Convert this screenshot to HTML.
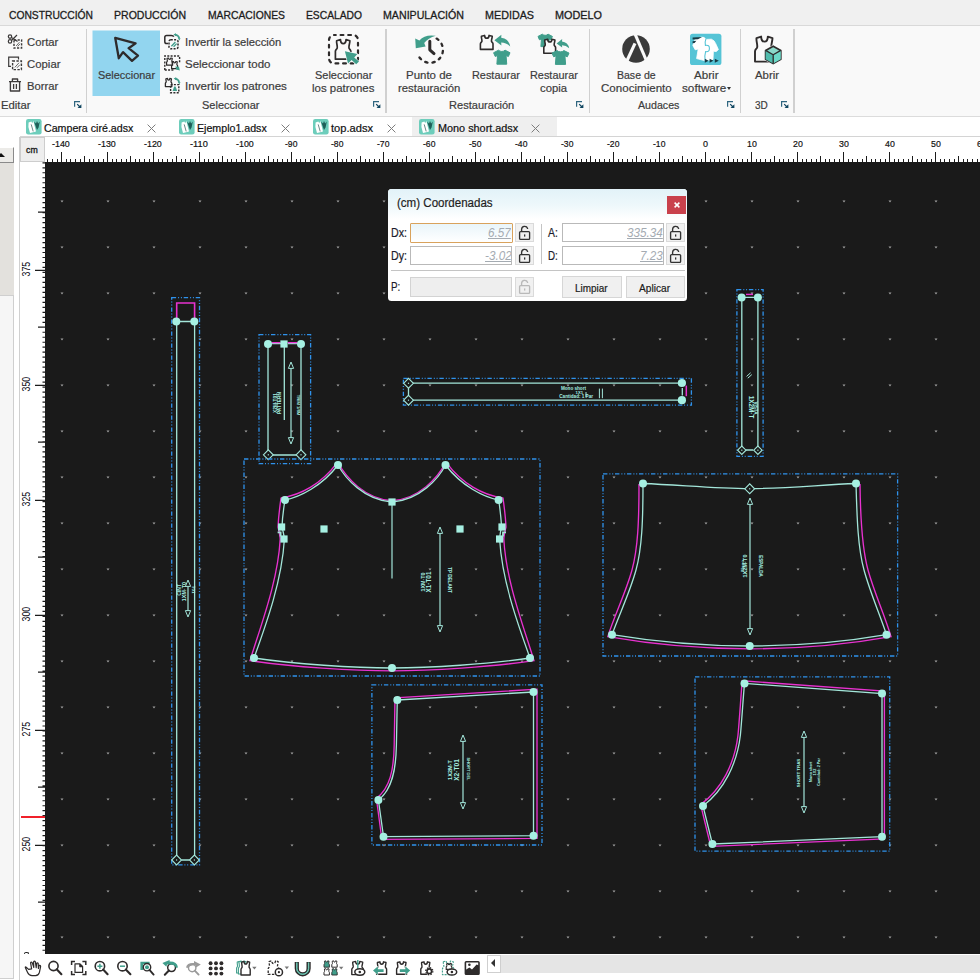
<!DOCTYPE html><html><head><meta charset="utf-8"><title>Audaces</title><style>*{box-sizing:border-box;margin:0;padding:0}
html,body{width:980px;height:980px;overflow:hidden;background:#fff}
body{font-family:"Liberation Sans",sans-serif;position:relative;color:#333}
.abs{position:absolute}
#menu{position:absolute;left:0;top:0;width:980px;height:25px;background:#f0f0f0}
#menu span{position:absolute;top:9.4px;font-size:11px;line-height:13px;color:#1c1c1c;white-space:nowrap;-webkit-text-stroke:0.3px #1c1c1c}
#ribbon{position:absolute;left:0;top:25px;width:980px;height:92px;background:#f9f9f9;border-top:1px solid #d9d9d9;border-bottom:1px solid #dcdcdc}
.t{position:absolute;font-size:11.5px;line-height:13px;color:#3a3a3a;white-space:nowrap}
.tc{position:absolute;font-size:11.5px;line-height:13px;color:#3a3a3a;white-space:nowrap;text-align:center;transform:translateX(-50%)}
.sep{position:absolute;top:29px;width:1px;height:69px;background:#d4d4d4}
.ic{position:absolute;overflow:visible}
#tabs{position:absolute;left:0;top:116px;width:980px;height:21px;background:#fff}
.tab{position:absolute;top:117px;height:19px;font-size:12px;line-height:19px;color:#1a1a1a;white-space:nowrap}
</style></head><body>
<div id="menu"><span id="m0" style="left:9px;transform-origin:0 0;transform:scaleX(0.935)">CONSTRUCCIÓN</span><span id="m1" style="left:114px;transform-origin:0 0;transform:scaleX(0.958)">PRODUCCIÓN</span><span id="m2" style="left:208px;transform-origin:0 0;transform:scaleX(0.940)">MARCACIONES</span><span id="m3" style="left:306px;transform-origin:0 0;transform:scaleX(0.935)">ESCALADO</span><span id="m4" style="left:383px;transform-origin:0 0;transform:scaleX(0.967)">MANIPULACIÓN</span><span id="m5" style="left:485px;transform-origin:0 0;transform:scaleX(0.978)">MEDIDAS</span><span id="m6" style="left:555px;transform-origin:0 0;transform:scaleX(0.986)">MODELO</span></div>
<div id="ribbon"></div><svg class="ic" style="left:0;top:0" width="980" height="116" viewBox="0 0 980 116"><rect x="92.5" y="30.5" width="67.5" height="65.5" fill="#92d5ef"/><g fill="none" stroke="#3c3a3a" stroke-width="1.2"><circle cx="10" cy="36.6" r="1.7"/><circle cx="10" cy="41.4" r="1.7"/><path d="M11.5,37.5L17.5,41.5M11.5,40.5L17,35"/><rect x="14" y="40" width="7.6" height="8" stroke-dasharray="2.2 1.4" stroke-width="1.4"/></g><path d="M16.2,46L19.4,42.2M17.8,46.4L20,43.8" stroke="#6a6a6a" stroke-width="1"/><g fill="none" stroke="#3c3a3a" stroke-width="1.2"><path d="M11,66.4H8.7V57.2H18.5V59.5"/><rect x="12.6" y="61" width="8.8" height="8.6" stroke-dasharray="2.4 1.4" stroke-width="1.4"/></g><path d="M14.8,67.4L19,62.8M17,67.8L19.8,64.8" stroke="#6a6a6a" stroke-width="1"/><g fill="none" stroke="#3c3a3a" stroke-width="1.35" stroke-linejoin="round"><path d="M9,81.6H21M12.4,81.4V79H17.6V81.4"/><path d="M10.4,82V91H19.6V82"/><path d="M13.6,84V89M16.4,84V89" stroke-width="1.3"/></g><path d="M115.2,37.8 L135.6,43.4 L128.6,48.2 L138,55.6 L132,60.8 L123,52.2 L118.8,58.2 Z" fill="none" stroke="#2e2b2b" stroke-width="2.3" stroke-linejoin="round"/><g fill="none" stroke="#2e2b2b" stroke-width="1.5"><path d="M168,43.6H166.6Q164.8,43.6 164.8,41.8V37.2Q164.8,35.4 166.6,35.4H171.4Q173.2,35.4 173.8,36.6"/><rect x="169" y="39.8" width="9" height="9" rx="1.8" stroke-dasharray="2 1.3"/></g><path d="M171.4,46.2L175.4,42M173.6,46.8L176.6,43.6" stroke="#409e8b" stroke-width="1.3"/><path d="M175,34.6Q178.6,35.2 179.4,38.6" fill="none" stroke="#409e8b" stroke-width="1.6"/><path d="M173.4,34.4L176,33.2L176,36.2Z M178,38L180.6,38.4L179.2,40.4Z" fill="#409e8b"/><g fill="none" stroke="#2e2b2b" stroke-width="1.4"><path d="M164.8,70V56H179.6V63" stroke-dasharray="2 1.3"/><path d="M164.8,70H174" stroke-dasharray="2 1.3"/><path d="M167.08,58.43 L168.58,58.00 C168.64,59.94 170.68,59.94 170.74,58.00 L172.24,58.43 C172.24,59.44 171.76,60.16 171.88,61.02 C172.00,61.60 172.60,61.60 172.60,62.32 L172.60,65.20 L166.60,65.20 L166.60,62.32 C166.60,61.60 167.20,61.60 167.32,61.02 C167.44,60.16 166.96,59.44 167.08,58.43 Z" fill="none" stroke="#2e2b2b" stroke-width="1.2" stroke-linejoin="round" /><path d="M172.08,61.93 L173.58,61.50 C173.64,63.44 175.68,63.44 175.74,61.50 L177.24,61.93 C177.24,62.94 176.76,63.66 176.88,64.52 C177.00,65.10 177.60,65.10 177.60,65.82 L177.60,68.70 L171.60,68.70 L171.60,65.82 C171.60,65.10 172.20,65.10 172.32,64.52 C172.44,63.66 171.96,62.94 172.08,61.93 Z" fill="none" stroke="#2e2b2b" stroke-width="1.2" stroke-linejoin="round" /></g><path d="M175.4,66.4L179,66.8L179.8,70.6L176.2,69.6Z" fill="#409e8b"/><g fill="none" stroke="#2e2b2b" stroke-width="1.4"><path d="M165.91,78.89 L167.51,78.40 C167.58,80.61 169.75,80.61 169.82,78.40 L171.42,78.89 C171.42,80.04 170.90,80.86 171.03,81.84 C171.16,82.50 171.80,82.50 171.80,83.32 L171.80,86.60 L165.40,86.60 L165.40,83.32 C165.40,82.50 166.04,82.50 166.17,81.84 C166.30,80.86 165.78,80.04 165.91,78.89 Z" fill="none" stroke="#2e2b2b" stroke-width="1.3" stroke-linejoin="round" /><rect x="170.6" y="84.6" width="8.2" height="8.2" stroke-dasharray="2 1.3"/></g><path d="M172.6,91L174.2,86.4H175.6L177.2,91Z" fill="#409e8b"/><path d="M175.2,78.6Q178.6,79.2 179.2,82.4" fill="none" stroke="#409e8b" stroke-width="1.6"/><path d="M173.6,78.4L176.2,77.2L176.2,80.2Z M177.8,82L180.6,82.2L179.2,84.2Z" fill="#409e8b"/><rect x="329" y="35" width="29" height="28.4" rx="5" fill="none" stroke="#2e2b2b" stroke-width="2.2" stroke-dasharray="2.8 4.8" stroke-dashoffset="1" stroke-linecap="round"/><path d="M336.63,40.78 L340.48,39.60 C340.64,44.89 345.87,44.89 346.03,39.60 L349.88,40.78 C349.88,43.52 348.64,45.48 348.95,47.83 C349.26,49.40 350.80,49.40 350.80,51.36 L350.80,59.20 L335.40,59.20 L335.40,51.36 C335.40,49.40 336.94,49.40 337.25,47.83 C337.56,45.48 336.32,43.52 336.63,40.78 Z" fill="none" stroke="#2e2b2b" stroke-width="1.7" stroke-linejoin="round" /><path d="M344.9,51.2 L357.4,54 L354.2,57.4 L359,61.6 L356.2,64.2 L351.6,60 L348,63.6 Z" fill="#409e8b" stroke="#f9f9f9" stroke-width="1.2" stroke-linejoin="round" paint-order="stroke"/><path d="M436.6,38.6 A13,13 0 1 1 417.8,54.4" fill="none" stroke="#2e2b2b" stroke-width="2.3" stroke-dasharray="2.3 4.9" stroke-linecap="round"/><path d="M429.8,41.2V49.8L434,53.6" fill="none" stroke="#2e2b2b" stroke-width="3" stroke-linecap="round" stroke-linejoin="round"/><path d="M415.2,38.6 L419.4,40.4 Q425,34 435.8,35.8 Q428,38 424.2,43 L425.6,46.4 L415.8,48.2 Z" fill="#409e8b"/><path d="M481.41,36.24 L484.56,35.40 C484.68,39.18 488.97,39.18 489.09,35.40 L492.24,36.24 C492.24,38.20 491.24,39.60 491.49,41.28 C491.74,42.40 493.00,42.40 493.00,43.80 L493.00,49.40 L480.40,49.40 L480.40,43.80 C480.40,42.40 481.66,42.40 481.91,41.28 C482.16,39.60 481.16,38.20 481.41,36.24 Z" fill="none" stroke="#2e2b2b" stroke-width="1.6" stroke-linejoin="round" /><path d="M494.4,40.2 L501.4,34.8 L501.2,37.8 Q508.6,38.4 510.2,46.4 Q506,42.6 501.2,42.6 L501.4,45.6 Z" fill="#409e8b"/><path d="M498.52,50.20 C500.16,51.88 503.44,51.88 505.08,50.20 L510.00,52.72 L508.36,56.50 L506.06,55.52 L506.72,64.20 L496.88,64.20 L497.54,55.52 L495.24,56.50 L493.60,52.72 Z" fill="#409e8b" stroke="#409e8b" stroke-width="1" stroke-linejoin="round"/><path d="M542.32,34.20 C543.76,35.69 546.64,35.69 548.08,34.20 L552.40,36.43 L550.96,39.78 L548.94,38.91 L549.52,46.60 L540.88,46.60 L541.46,38.91 L539.44,39.78 L538.00,36.43 Z" fill="#409e8b" stroke="#409e8b" stroke-width="1" stroke-linejoin="round"/><g><path d="M544.74,40.04 L547.69,39.20 C547.81,42.98 551.82,42.98 551.94,39.20 L554.89,40.04 C554.89,42.00 553.95,43.40 554.18,45.08 C554.42,46.20 555.60,46.20 555.60,47.60 L555.60,53.20 L543.80,53.20 L543.80,47.60 C543.80,46.20 544.98,46.20 545.22,45.08 C545.45,43.40 544.51,42.00 544.74,40.04 Z" fill="#f9f9f9" stroke="#2e2b2b" stroke-width="1.6" stroke-linejoin="round" /></g><path d="M556.6,43.4 L562.2,39 L562,41.4 Q568,42 569.2,48.2 Q566,45.2 562,45.2 L562.2,47.6 Z" fill="#409e8b"/><path d="M557.10,50.60 C558.80,52.26 562.20,52.26 563.90,50.60 L569.00,53.08 L567.30,56.81 L564.92,55.84 L565.60,64.40 L555.40,64.40 L556.08,55.84 L553.70,56.81 L552.00,53.08 Z" fill="#409e8b" stroke="#409e8b" stroke-width="1" stroke-linejoin="round"/><circle cx="636" cy="49" r="13.8" fill="#3a3a3a"/><clipPath id="cpl"><circle cx="636" cy="49" r="14.6"/></clipPath><g clip-path="url(#cpl)" stroke="#f9f9f9" stroke-width="3.1" fill="none"><path d="M634.6,33 L647,62"/><path d="M635,43.4 L626.4,62"/></g><rect x="690" y="33.7" width="31.4" height="31.3" rx="2.6" fill="#55c4d6"/><path d="M695.4,38.8 L701,37.2 Q704.6,36.6 706,39.4 L711.4,39.2 Q714.6,40.4 715.6,43.4 L718.4,49.6 L716.2,51.6 L713.4,51.2 L713,59.4 L705.4,60.8 L696.6,58.6 L698.2,49 L695.2,49.8 L692.8,45.4 Z" fill="#fff" stroke="#fff" stroke-width="0.8" stroke-linejoin="round"/><path d="M706,38.6 Q704.6,42 705.4,45.4 Q709.6,44.6 709.4,48.4 Q709.4,52.4 705.6,51.6 Q704.4,55 705.2,61" fill="none" stroke="#55c4d6" stroke-width="1.1"/><path d="M692.6,37.6L702,37L698,39.2L692.6,39.4Z M692.6,41.2L696.4,40.8L694.6,43L692.6,43.2Z" fill="#173a44"/><path d="M704.8,58.8L708.6,60.8L704.8,62.8Z M709.6,58.8L713.4,60.8L709.6,62.8Z M714.8,58.8L718.8,60.8L714.8,62.8Z" fill="#173a44"/><path d="M756.49,38.10 L761.14,36.60 C761.32,43.35 767.65,43.35 767.83,36.60 L772.48,38.10 C772.48,41.60 771.00,44.10 771.37,47.10 C771.74,49.10 773.60,49.10 773.60,51.60 L773.60,61.60 L755.00,61.60 L755.00,51.60 C755.00,49.10 756.86,49.10 757.23,47.10 C757.60,44.10 756.12,41.60 756.49,38.10 Z" fill="none" stroke="#2e2b2b" stroke-width="1.9" stroke-linejoin="round" /><path d="M773.2,46.2 L780.8,50.4 V59.2 L773.2,63.6 L765.6,59.2 V50.4 Z" fill="#7fd6c6" stroke="#f9f9f9" stroke-width="2.4" paint-order="stroke"/><path d="M773.2,46.2 L780.8,50.4 V59.2 L773.2,63.6 L765.6,59.2 V50.4 Z" fill="#8ad9c9" stroke="#2e2b2b" stroke-width="1.7" stroke-linejoin="round"/><path d="M773.2,54.8 L780.8,50.4 V59.2 L773.2,63.6Z" fill="#6cd9c7"/><path d="M773.2,54.8 L765.6,50.4 V59.2 L773.2,63.6Z" fill="#50bcad"/><path d="M765.6,50.4 L773.2,54.8 L780.8,50.4 M773.2,54.8 V63.6" fill="none" stroke="#2e2b2b" stroke-width="1.3" stroke-linejoin="round"/></svg><div class="abs" style="left:86px;top:29px;width:1.2px;height:84px;background:#d0d0d0"></div><div class="abs" style="left:385.4px;top:29px;width:1.2px;height:84px;background:#d0d0d0"></div><div class="abs" style="left:588.8px;top:29px;width:1.2px;height:84px;background:#d0d0d0"></div><div class="abs" style="left:740px;top:29px;width:1.2px;height:84px;background:#d0d0d0"></div><div class="abs" style="left:793.4px;top:29px;width:1.2px;height:84px;background:#d0d0d0"></div><svg class="ic" style="left:73.5px;top:101px" width="8" height="8" viewBox="0 0 8 8"><path d="M0.6,5.8V0.7H6" fill="none" stroke="#2f6680" stroke-width="1.2"/><path d="M3.2,3.2L6,6" stroke="#0f4560" stroke-width="1.2" fill="none"/><path d="M7.4,3.3V7H3.5Z" fill="#0f4560"/></svg><svg class="ic" style="left:373px;top:101px" width="8" height="8" viewBox="0 0 8 8"><path d="M0.6,5.8V0.7H6" fill="none" stroke="#2f6680" stroke-width="1.2"/><path d="M3.2,3.2L6,6" stroke="#0f4560" stroke-width="1.2" fill="none"/><path d="M7.4,3.3V7H3.5Z" fill="#0f4560"/></svg><svg class="ic" style="left:576px;top:101px" width="8" height="8" viewBox="0 0 8 8"><path d="M0.6,5.8V0.7H6" fill="none" stroke="#2f6680" stroke-width="1.2"/><path d="M3.2,3.2L6,6" stroke="#0f4560" stroke-width="1.2" fill="none"/><path d="M7.4,3.3V7H3.5Z" fill="#0f4560"/></svg><svg class="ic" style="left:727px;top:101px" width="8" height="8" viewBox="0 0 8 8"><path d="M0.6,5.8V0.7H6" fill="none" stroke="#2f6680" stroke-width="1.2"/><path d="M3.2,3.2L6,6" stroke="#0f4560" stroke-width="1.2" fill="none"/><path d="M7.4,3.3V7H3.5Z" fill="#0f4560"/></svg><svg class="ic" style="left:781.3px;top:101px" width="8" height="8" viewBox="0 0 8 8"><path d="M0.6,5.8V0.7H6" fill="none" stroke="#2f6680" stroke-width="1.2"/><path d="M3.2,3.2L6,6" stroke="#0f4560" stroke-width="1.2" fill="none"/><path d="M7.4,3.3V7H3.5Z" fill="#0f4560"/></svg><span style="position:absolute;left:27.0px;top:35.0px;font-size:11.5px;line-height:14px;color:#3c3c3c;white-space:nowrap;transform-origin:0 0;transform:scaleX(0.980);-webkit-text-stroke:0.2px #3c3c3c;">Cortar</span><span style="position:absolute;left:27.0px;top:57.0px;font-size:11.5px;line-height:14px;color:#3c3c3c;white-space:nowrap;transform-origin:0 0;transform:scaleX(0.989);-webkit-text-stroke:0.2px #3c3c3c;">Copiar</span><span style="position:absolute;left:26.8px;top:78.6px;font-size:11.5px;line-height:14px;color:#3c3c3c;white-space:nowrap;transform-origin:0 0;transform:scaleX(0.977);-webkit-text-stroke:0.2px #3c3c3c;">Borrar</span><span style="position:absolute;left:0.5px;top:97.8px;font-size:11.5px;line-height:14px;color:#3c3c3c;white-space:nowrap;transform-origin:0 0;transform:scaleX(0.982);-webkit-text-stroke:0.2px #3c3c3c;">Editar</span><span style="position:absolute;left:97.7px;top:68.0px;font-size:11.5px;line-height:14px;color:#3c3c3c;white-space:nowrap;transform-origin:0 0;transform:scaleX(0.950);-webkit-text-stroke:0.2px #3c3c3c;">Seleccionar</span><span style="position:absolute;left:184.6px;top:35.0px;font-size:11.5px;line-height:14px;color:#3c3c3c;white-space:nowrap;transform-origin:0 0;transform:scaleX(0.979);-webkit-text-stroke:0.2px #3c3c3c;">Invertir la selección</span><span style="position:absolute;left:184.6px;top:57.0px;font-size:11.5px;line-height:14px;color:#3c3c3c;white-space:nowrap;transform-origin:0 0;transform:scaleX(0.997);-webkit-text-stroke:0.2px #3c3c3c;">Seleccionar todo</span><span style="position:absolute;left:184.6px;top:78.6px;font-size:11.5px;line-height:14px;color:#3c3c3c;white-space:nowrap;transform-origin:0 0;transform:scaleX(1.009);-webkit-text-stroke:0.2px #3c3c3c;">Invertir los patrones</span><span style="position:absolute;left:201.5px;top:97.8px;font-size:11.5px;line-height:14px;color:#3c3c3c;white-space:nowrap;transform-origin:0 0;transform:scaleX(0.957);-webkit-text-stroke:0.2px #3c3c3c;">Seleccionar</span><span style="position:absolute;left:314.7px;top:68.0px;font-size:11.5px;line-height:14px;color:#3c3c3c;white-space:nowrap;transform-origin:0 0;transform:scaleX(0.954);-webkit-text-stroke:0.2px #3c3c3c;">Seleccionar</span><span style="position:absolute;left:312.0px;top:80.8px;font-size:11.5px;line-height:14px;color:#3c3c3c;white-space:nowrap;transform-origin:0 0;transform:scaleX(0.996);-webkit-text-stroke:0.2px #3c3c3c;">los patrones</span><span style="position:absolute;left:405.6px;top:68.0px;font-size:11.5px;line-height:14px;color:#3c3c3c;white-space:nowrap;transform-origin:0 0;transform:scaleX(0.997);-webkit-text-stroke:0.2px #3c3c3c;">Punto de</span><span style="position:absolute;left:397.8px;top:80.8px;font-size:11.5px;line-height:14px;color:#3c3c3c;white-space:nowrap;transform-origin:0 0;transform:scaleX(0.986);-webkit-text-stroke:0.2px #3c3c3c;">restauración</span><span style="position:absolute;left:448.8px;top:97.8px;font-size:11.5px;line-height:14px;color:#3c3c3c;white-space:nowrap;transform-origin:0 0;transform:scaleX(0.962);-webkit-text-stroke:0.2px #3c3c3c;">Restauración</span><span style="position:absolute;left:471.6px;top:68.0px;font-size:11.5px;line-height:14px;color:#3c3c3c;white-space:nowrap;transform-origin:0 0;transform:scaleX(0.947);-webkit-text-stroke:0.2px #3c3c3c;">Restaurar</span><span style="position:absolute;left:530.0px;top:68.0px;font-size:11.5px;line-height:14px;color:#3c3c3c;white-space:nowrap;transform-origin:0 0;transform:scaleX(0.947);-webkit-text-stroke:0.2px #3c3c3c;">Restaurar</span><span style="position:absolute;left:540.0px;top:80.8px;font-size:11.5px;line-height:14px;color:#3c3c3c;white-space:nowrap;transform-origin:0 0;transform:scaleX(0.982);-webkit-text-stroke:0.2px #3c3c3c;">copia</span><span style="position:absolute;left:616.8px;top:68.0px;font-size:11.5px;line-height:14px;color:#3c3c3c;white-space:nowrap;transform-origin:0 0;transform:scaleX(0.915);-webkit-text-stroke:0.2px #3c3c3c;">Base de</span><span style="position:absolute;left:600.7px;top:80.8px;font-size:11.5px;line-height:14px;color:#3c3c3c;white-space:nowrap;transform-origin:0 0;transform:scaleX(1.006);-webkit-text-stroke:0.2px #3c3c3c;">Conocimiento</span><span style="position:absolute;left:693.5px;top:68.0px;font-size:11.5px;line-height:14px;color:#3c3c3c;white-space:nowrap;transform-origin:0 0;transform:scaleX(1.009);-webkit-text-stroke:0.2px #3c3c3c;">Abrir</span><span style="position:absolute;left:681.7px;top:80.8px;font-size:11.5px;line-height:14px;color:#3c3c3c;white-space:nowrap;transform-origin:0 0;transform:scaleX(1.019);-webkit-text-stroke:0.2px #3c3c3c;">software</span><div class="abs" style="left:727px;top:87px;width:0;height:0;border-left:2.8px solid transparent;border-right:2.8px solid transparent;border-top:3px solid #333"></div><span style="position:absolute;left:637.6px;top:97.8px;font-size:11.5px;line-height:14px;color:#3c3c3c;white-space:nowrap;transform-origin:0 0;transform:scaleX(0.925);-webkit-text-stroke:0.2px #3c3c3c;">Audaces</span><span style="position:absolute;left:755.0px;top:68.0px;font-size:11.5px;line-height:14px;color:#3c3c3c;white-space:nowrap;transform-origin:0 0;transform:scaleX(0.988);-webkit-text-stroke:0.2px #3c3c3c;">Abrir</span><span style="position:absolute;left:755.0px;top:97.8px;font-size:11.5px;line-height:14px;color:#3c3c3c;white-space:nowrap;transform-origin:0 0;transform:scaleX(0.871);-webkit-text-stroke:0.2px #3c3c3c;">3D</span>
<div class="abs" style="left:0;top:117px;width:980px;height:19px;background:#fff"></div><div class="abs" style="left:412px;top:117px;width:145px;height:19px;background:#efefef"></div><div class="abs" style="left:20px;top:136px;width:960px;height:1px;background:#d4d4d4"></div><svg class="ic" style="left:26px;top:119px" width="16" height="16" viewBox="0 0 16 16"><rect x="0" y="0" width="15.6" height="15.4" rx="2.2" fill="#6dcdbb"/><path d="M2.6,3.4 L5.4,2.4 L6.2,4.2 L7.4,2 L10,12.6 L4,14 L2.4,8Z" fill="#fff"/><path d="M5.2,5.4L7.2,12.4" stroke="#5e7c78" stroke-width="0.9"/><path d="M8,2.6 L10,4.4 L11,2 L12.2,4.6 L13.8,2.4 L12.6,8.4 L11,11 L9.6,7Z" fill="#1f5f59"/></svg><span style="position:absolute;left:44.4px;top:122.4px;font-size:10.8px;line-height:13px;color:#101010;white-space:nowrap;transform-origin:0 0;transform:scaleX(0.986);-webkit-text-stroke:0.2px #101010;">Campera ciré.adsx</span><svg class="ic" style="left:147px;top:124px" width="9" height="9" viewBox="0 0 9 9"><path d="M0.6,0.6L8.4,8.4M8.4,0.6L0.6,8.4" stroke="#7d7d7d" stroke-width="1"/></svg><svg class="ic" style="left:179px;top:119px" width="16" height="16" viewBox="0 0 16 16"><rect x="0" y="0" width="15.6" height="15.4" rx="2.2" fill="#6dcdbb"/><path d="M2.6,3.4 L5.4,2.4 L6.2,4.2 L7.4,2 L10,12.6 L4,14 L2.4,8Z" fill="#fff"/><path d="M5.2,5.4L7.2,12.4" stroke="#5e7c78" stroke-width="0.9"/><path d="M8,2.6 L10,4.4 L11,2 L12.2,4.6 L13.8,2.4 L12.6,8.4 L11,11 L9.6,7Z" fill="#1f5f59"/></svg><span style="position:absolute;left:197.4px;top:122.4px;font-size:10.8px;line-height:13px;color:#101010;white-space:nowrap;transform-origin:0 0;transform:scaleX(0.985);-webkit-text-stroke:0.2px #101010;">Ejemplo1.adsx</span><svg class="ic" style="left:280.6px;top:124px" width="9" height="9" viewBox="0 0 9 9"><path d="M0.6,0.6L8.4,8.4M8.4,0.6L0.6,8.4" stroke="#7d7d7d" stroke-width="1"/></svg><svg class="ic" style="left:313px;top:119px" width="16" height="16" viewBox="0 0 16 16"><rect x="0" y="0" width="15.6" height="15.4" rx="2.2" fill="#6dcdbb"/><path d="M2.6,3.4 L5.4,2.4 L6.2,4.2 L7.4,2 L10,12.6 L4,14 L2.4,8Z" fill="#fff"/><path d="M5.2,5.4L7.2,12.4" stroke="#5e7c78" stroke-width="0.9"/><path d="M8,2.6 L10,4.4 L11,2 L12.2,4.6 L13.8,2.4 L12.6,8.4 L11,11 L9.6,7Z" fill="#1f5f59"/></svg><span style="position:absolute;left:331.4px;top:122.4px;font-size:10.8px;line-height:13px;color:#101010;white-space:nowrap;transform-origin:0 0;transform:scaleX(1.029);-webkit-text-stroke:0.2px #101010;">top.adsx</span><svg class="ic" style="left:387px;top:124px" width="9" height="9" viewBox="0 0 9 9"><path d="M0.6,0.6L8.4,8.4M8.4,0.6L0.6,8.4" stroke="#7d7d7d" stroke-width="1"/></svg><svg class="ic" style="left:419.3px;top:119px" width="16" height="16" viewBox="0 0 16 16"><rect x="0" y="0" width="15.6" height="15.4" rx="2.2" fill="#6dcdbb"/><path d="M2.6,3.4 L5.4,2.4 L6.2,4.2 L7.4,2 L10,12.6 L4,14 L2.4,8Z" fill="#fff"/><path d="M5.2,5.4L7.2,12.4" stroke="#5e7c78" stroke-width="0.9"/><path d="M8,2.6 L10,4.4 L11,2 L12.2,4.6 L13.8,2.4 L12.6,8.4 L11,11 L9.6,7Z" fill="#1f5f59"/></svg><span style="position:absolute;left:437.6px;top:122.4px;font-size:10.8px;line-height:13px;color:#101010;white-space:nowrap;transform-origin:0 0;transform:scaleX(1.005);-webkit-text-stroke:0.2px #101010;">Mono short.adsx</span><svg class="ic" style="left:531px;top:124px" width="9" height="9" viewBox="0 0 9 9"><path d="M0.6,0.6L8.4,8.4M8.4,0.6L0.6,8.4" stroke="#7d7d7d" stroke-width="1"/></svg>
<div class="abs" style="left:0;top:117px;width:20px;height:863px;background:#fff"></div><div class="abs" style="left:0;top:163px;width:14px;height:132px;background:#e3e1dd"></div><div class="abs" style="left:0;top:295px;width:14px;height:684px;background:#f6f6f6;border:1px solid #cfcfcf;border-left:none"></div><div class="abs" style="left:0;top:147px;width:13.5px;height:16px;background:#ecebe8;border:1px solid #fff;border-right:1.5px solid #8a8a8a;border-bottom:1.5px solid #8a8a8a;border-left:none"></div><div class="abs" style="left:-2.8px;top:152.8px;width:0;height:0;border-left:4.2px solid transparent;border-right:4.2px solid transparent;border-bottom:4.2px solid #111"></div><div class="abs" style="left:19px;top:137px;width:1px;height:843px;background:#d0d0d0"></div><div class="abs" style="left:20px;top:137px;width:25px;height:25px;background:#eeeeee;border:1.2px solid #cdcdcd"></div><span style="position:absolute;left:26.0px;top:143.5px;font-size:9.6px;line-height:12px;color:#1a1a1a;white-space:nowrap;transform-origin:0 0;transform:scaleX(0.914);-webkit-text-stroke:0.35px #1a1a1a;">cm</span><svg class="ic" style="left:0;top:0" width="980" height="980" viewBox="0 0 980 980" shape-rendering="crispEdges"><rect x="45" y="137" width="935" height="25" fill="#fff"/><rect x="20" y="162" width="25" height="792" fill="#fff"/><path d="M47,159h1v3h-1zM52,159h1v3h-1zM57,159h1v3h-1zM61,152h1v10h-1zM66,159h1v3h-1zM70,159h1v3h-1zM75,159h1v3h-1zM80,159h1v3h-1zM84,156h1v6h-1zM89,159h1v3h-1zM93,159h1v3h-1zM98,159h1v3h-1zM103,159h1v3h-1zM107,152h1v10h-1zM112,159h1v3h-1zM116,159h1v3h-1zM121,159h1v3h-1zM126,159h1v3h-1zM130,156h1v6h-1zM135,159h1v3h-1zM139,159h1v3h-1zM144,159h1v3h-1zM149,159h1v3h-1zM153,152h1v10h-1zM158,159h1v3h-1zM162,159h1v3h-1zM167,159h1v3h-1zM172,159h1v3h-1zM176,156h1v6h-1zM181,159h1v3h-1zM185,159h1v3h-1zM190,159h1v3h-1zM195,159h1v3h-1zM199,152h1v10h-1zM204,159h1v3h-1zM208,159h1v3h-1zM213,159h1v3h-1zM218,159h1v3h-1zM222,156h1v6h-1zM227,159h1v3h-1zM231,159h1v3h-1zM236,159h1v3h-1zM241,159h1v3h-1zM245,152h1v10h-1zM250,159h1v3h-1zM254,159h1v3h-1zM259,159h1v3h-1zM264,159h1v3h-1zM268,156h1v6h-1zM273,159h1v3h-1zM277,159h1v3h-1zM282,159h1v3h-1zM287,159h1v3h-1zM291,152h1v10h-1zM296,159h1v3h-1zM300,159h1v3h-1zM305,159h1v3h-1zM310,159h1v3h-1zM314,156h1v6h-1zM319,159h1v3h-1zM323,159h1v3h-1zM328,159h1v3h-1zM333,159h1v3h-1zM337,152h1v10h-1zM342,159h1v3h-1zM346,159h1v3h-1zM351,159h1v3h-1zM356,159h1v3h-1zM360,156h1v6h-1zM365,159h1v3h-1zM369,159h1v3h-1zM374,159h1v3h-1zM379,159h1v3h-1zM383,152h1v10h-1zM388,159h1v3h-1zM392,159h1v3h-1zM397,159h1v3h-1zM402,159h1v3h-1zM406,156h1v6h-1zM411,159h1v3h-1zM415,159h1v3h-1zM420,159h1v3h-1zM425,159h1v3h-1zM429,152h1v10h-1zM434,159h1v3h-1zM438,159h1v3h-1zM443,159h1v3h-1zM448,159h1v3h-1zM452,156h1v6h-1zM457,159h1v3h-1zM461,159h1v3h-1zM466,159h1v3h-1zM471,159h1v3h-1zM475,152h1v10h-1zM480,159h1v3h-1zM484,159h1v3h-1zM489,159h1v3h-1zM494,159h1v3h-1zM498,156h1v6h-1zM503,159h1v3h-1zM507,159h1v3h-1zM512,159h1v3h-1zM517,159h1v3h-1zM521,152h1v10h-1zM526,159h1v3h-1zM530,159h1v3h-1zM535,159h1v3h-1zM540,159h1v3h-1zM544,156h1v6h-1zM549,159h1v3h-1zM553,159h1v3h-1zM558,159h1v3h-1zM563,159h1v3h-1zM567,152h1v10h-1zM572,159h1v3h-1zM576,159h1v3h-1zM581,159h1v3h-1zM586,159h1v3h-1zM590,156h1v6h-1zM595,159h1v3h-1zM599,159h1v3h-1zM604,159h1v3h-1zM609,159h1v3h-1zM613,152h1v10h-1zM618,159h1v3h-1zM622,159h1v3h-1zM627,159h1v3h-1zM632,159h1v3h-1zM636,156h1v6h-1zM641,159h1v3h-1zM645,159h1v3h-1zM650,159h1v3h-1zM655,159h1v3h-1zM659,152h1v10h-1zM664,159h1v3h-1zM668,159h1v3h-1zM673,159h1v3h-1zM678,159h1v3h-1zM682,156h1v6h-1zM687,159h1v3h-1zM691,159h1v3h-1zM696,159h1v3h-1zM701,159h1v3h-1zM705,152h1v10h-1zM710,159h1v3h-1zM714,159h1v3h-1zM719,159h1v3h-1zM724,159h1v3h-1zM728,156h1v6h-1zM733,159h1v3h-1zM737,159h1v3h-1zM742,159h1v3h-1zM747,159h1v3h-1zM751,152h1v10h-1zM756,159h1v3h-1zM760,159h1v3h-1zM765,159h1v3h-1zM770,159h1v3h-1zM774,156h1v6h-1zM779,159h1v3h-1zM783,159h1v3h-1zM788,159h1v3h-1zM793,159h1v3h-1zM797,152h1v10h-1zM802,159h1v3h-1zM806,159h1v3h-1zM811,159h1v3h-1zM816,159h1v3h-1zM820,156h1v6h-1zM825,159h1v3h-1zM829,159h1v3h-1zM834,159h1v3h-1zM839,159h1v3h-1zM843,152h1v10h-1zM848,159h1v3h-1zM852,159h1v3h-1zM857,159h1v3h-1zM862,159h1v3h-1zM866,156h1v6h-1zM871,159h1v3h-1zM875,159h1v3h-1zM880,159h1v3h-1zM885,159h1v3h-1zM889,152h1v10h-1zM894,159h1v3h-1zM898,159h1v3h-1zM903,159h1v3h-1zM908,159h1v3h-1zM912,156h1v6h-1zM917,159h1v3h-1zM921,159h1v3h-1zM926,159h1v3h-1zM931,159h1v3h-1zM935,152h1v10h-1zM940,159h1v3h-1zM944,159h1v3h-1zM949,159h1v3h-1zM954,159h1v3h-1zM958,156h1v6h-1zM963,159h1v3h-1zM967,159h1v3h-1zM972,159h1v3h-1zM977,159h1v3h-1z" fill="#1c1c1c"/><path d="M35,269.70v1.2h10v-1.2zM35,384.70v1.2h10v-1.2zM35,499.70v1.2h10v-1.2zM35,614.70v1.2h10v-1.2zM35,729.70v1.2h10v-1.2zM35,844.70v1.2h10v-1.2zM38,211.45v1.3h7v-1.3zM38,326.45v1.3h7v-1.3zM38,441.45v1.3h7v-1.3zM38,556.45v1.3h7v-1.3zM38,671.45v1.3h7v-1.3zM38,786.45v1.3h7v-1.3zM38,901.45v1.3h7v-1.3zM42.5,162.20v1.2h2.5v-1.2zM42.5,167.19v1.2h2.5v-1.2zM42.5,172.17v1.2h2.5v-1.2zM42.5,177.15v1.2h2.5v-1.2zM42.5,182.14v1.2h2.5v-1.2zM42.5,187.12v1.2h2.5v-1.2zM42.5,192.11v1.2h2.5v-1.2zM42.5,197.09v1.2h2.5v-1.2zM42.5,202.07v1.2h2.5v-1.2zM42.5,207.06v1.2h2.5v-1.2zM42.5,212.04v1.2h2.5v-1.2zM42.5,217.03v1.2h2.5v-1.2zM42.5,222.01v1.2h2.5v-1.2zM42.5,226.99v1.2h2.5v-1.2zM42.5,231.98v1.2h2.5v-1.2zM42.5,236.96v1.2h2.5v-1.2zM42.5,241.95v1.2h2.5v-1.2zM42.5,246.93v1.2h2.5v-1.2zM42.5,251.91v1.2h2.5v-1.2zM42.5,256.90v1.2h2.5v-1.2zM42.5,261.88v1.2h2.5v-1.2zM42.5,266.87v1.2h2.5v-1.2zM42.5,271.85v1.2h2.5v-1.2zM42.5,276.83v1.2h2.5v-1.2zM42.5,281.82v1.2h2.5v-1.2zM42.5,286.80v1.2h2.5v-1.2zM42.5,291.79v1.2h2.5v-1.2zM42.5,296.77v1.2h2.5v-1.2zM42.5,301.75v1.2h2.5v-1.2zM42.5,306.74v1.2h2.5v-1.2zM42.5,311.72v1.2h2.5v-1.2zM42.5,316.71v1.2h2.5v-1.2zM42.5,321.69v1.2h2.5v-1.2zM42.5,326.67v1.2h2.5v-1.2zM42.5,331.66v1.2h2.5v-1.2zM42.5,336.64v1.2h2.5v-1.2zM42.5,341.63v1.2h2.5v-1.2zM42.5,346.61v1.2h2.5v-1.2zM42.5,351.59v1.2h2.5v-1.2zM42.5,356.58v1.2h2.5v-1.2zM42.5,361.56v1.2h2.5v-1.2zM42.5,366.55v1.2h2.5v-1.2zM42.5,371.53v1.2h2.5v-1.2zM42.5,376.51v1.2h2.5v-1.2zM42.5,381.50v1.2h2.5v-1.2zM42.5,386.48v1.2h2.5v-1.2zM42.5,391.47v1.2h2.5v-1.2zM42.5,396.45v1.2h2.5v-1.2zM42.5,401.43v1.2h2.5v-1.2zM42.5,406.42v1.2h2.5v-1.2zM42.5,411.40v1.2h2.5v-1.2zM42.5,416.39v1.2h2.5v-1.2zM42.5,421.37v1.2h2.5v-1.2zM42.5,426.35v1.2h2.5v-1.2zM42.5,431.34v1.2h2.5v-1.2zM42.5,436.32v1.2h2.5v-1.2zM42.5,441.31v1.2h2.5v-1.2zM42.5,446.29v1.2h2.5v-1.2zM42.5,451.27v1.2h2.5v-1.2zM42.5,456.26v1.2h2.5v-1.2zM42.5,461.24v1.2h2.5v-1.2zM42.5,466.23v1.2h2.5v-1.2zM42.5,471.21v1.2h2.5v-1.2zM42.5,476.19v1.2h2.5v-1.2zM42.5,481.18v1.2h2.5v-1.2zM42.5,486.16v1.2h2.5v-1.2zM42.5,491.15v1.2h2.5v-1.2zM42.5,496.13v1.2h2.5v-1.2zM42.5,501.11v1.2h2.5v-1.2zM42.5,506.10v1.2h2.5v-1.2zM42.5,511.08v1.2h2.5v-1.2zM42.5,516.07v1.2h2.5v-1.2zM42.5,521.05v1.2h2.5v-1.2zM42.5,526.03v1.2h2.5v-1.2zM42.5,531.02v1.2h2.5v-1.2zM42.5,536.00v1.2h2.5v-1.2zM42.5,540.99v1.2h2.5v-1.2zM42.5,545.97v1.2h2.5v-1.2zM42.5,550.95v1.2h2.5v-1.2zM42.5,555.94v1.2h2.5v-1.2zM42.5,560.92v1.2h2.5v-1.2zM42.5,565.91v1.2h2.5v-1.2zM42.5,570.89v1.2h2.5v-1.2zM42.5,575.87v1.2h2.5v-1.2zM42.5,580.86v1.2h2.5v-1.2zM42.5,585.84v1.2h2.5v-1.2zM42.5,590.83v1.2h2.5v-1.2zM42.5,595.81v1.2h2.5v-1.2zM42.5,600.79v1.2h2.5v-1.2zM42.5,605.78v1.2h2.5v-1.2zM42.5,610.76v1.2h2.5v-1.2zM42.5,615.75v1.2h2.5v-1.2zM42.5,620.73v1.2h2.5v-1.2zM42.5,625.71v1.2h2.5v-1.2zM42.5,630.70v1.2h2.5v-1.2zM42.5,635.68v1.2h2.5v-1.2zM42.5,640.67v1.2h2.5v-1.2zM42.5,645.65v1.2h2.5v-1.2zM42.5,650.63v1.2h2.5v-1.2zM42.5,655.62v1.2h2.5v-1.2zM42.5,660.60v1.2h2.5v-1.2zM42.5,665.59v1.2h2.5v-1.2zM42.5,670.57v1.2h2.5v-1.2zM42.5,675.55v1.2h2.5v-1.2zM42.5,680.54v1.2h2.5v-1.2zM42.5,685.52v1.2h2.5v-1.2zM42.5,690.51v1.2h2.5v-1.2zM42.5,695.49v1.2h2.5v-1.2zM42.5,700.47v1.2h2.5v-1.2zM42.5,705.46v1.2h2.5v-1.2zM42.5,710.44v1.2h2.5v-1.2zM42.5,715.43v1.2h2.5v-1.2zM42.5,720.41v1.2h2.5v-1.2zM42.5,725.39v1.2h2.5v-1.2zM42.5,730.38v1.2h2.5v-1.2zM42.5,735.36v1.2h2.5v-1.2zM42.5,740.35v1.2h2.5v-1.2zM42.5,745.33v1.2h2.5v-1.2zM42.5,750.31v1.2h2.5v-1.2zM42.5,755.30v1.2h2.5v-1.2zM42.5,760.28v1.2h2.5v-1.2zM42.5,765.27v1.2h2.5v-1.2zM42.5,770.25v1.2h2.5v-1.2zM42.5,775.23v1.2h2.5v-1.2zM42.5,780.22v1.2h2.5v-1.2zM42.5,785.20v1.2h2.5v-1.2zM42.5,790.19v1.2h2.5v-1.2zM42.5,795.17v1.2h2.5v-1.2zM42.5,800.15v1.2h2.5v-1.2zM42.5,805.14v1.2h2.5v-1.2zM42.5,810.12v1.2h2.5v-1.2zM42.5,815.11v1.2h2.5v-1.2zM42.5,820.09v1.2h2.5v-1.2zM42.5,825.07v1.2h2.5v-1.2zM42.5,830.06v1.2h2.5v-1.2zM42.5,835.04v1.2h2.5v-1.2zM42.5,840.03v1.2h2.5v-1.2zM42.5,845.01v1.2h2.5v-1.2zM42.5,849.99v1.2h2.5v-1.2zM42.5,854.98v1.2h2.5v-1.2zM42.5,859.96v1.2h2.5v-1.2zM42.5,864.95v1.2h2.5v-1.2zM42.5,869.93v1.2h2.5v-1.2zM42.5,874.91v1.2h2.5v-1.2zM42.5,879.90v1.2h2.5v-1.2zM42.5,884.88v1.2h2.5v-1.2zM42.5,889.87v1.2h2.5v-1.2zM42.5,894.85v1.2h2.5v-1.2zM42.5,899.83v1.2h2.5v-1.2zM42.5,904.82v1.2h2.5v-1.2zM42.5,909.80v1.2h2.5v-1.2zM42.5,914.79v1.2h2.5v-1.2zM42.5,919.77v1.2h2.5v-1.2zM42.5,924.75v1.2h2.5v-1.2zM42.5,929.74v1.2h2.5v-1.2zM42.5,934.72v1.2h2.5v-1.2zM42.5,939.71v1.2h2.5v-1.2zM42.5,944.69v1.2h2.5v-1.2zM42.5,949.67v1.2h2.5v-1.2z" fill="#1c1c1c" shape-rendering="auto"/><rect x="21" y="816" width="24" height="1.6" fill="#f0202a"/></svg><span style="position:absolute;left:52.2px;top:138.2px;font-size:9.5px;line-height:11px;color:#111;white-space:nowrap;transform-origin:0 0;transform:scaleX(0.936);-webkit-text-stroke:0.2px #111;">-140</span><span style="position:absolute;left:98.2px;top:138.2px;font-size:9.5px;line-height:11px;color:#111;white-space:nowrap;transform-origin:0 0;transform:scaleX(0.936);-webkit-text-stroke:0.2px #111;">-130</span><span style="position:absolute;left:144.2px;top:138.2px;font-size:9.5px;line-height:11px;color:#111;white-space:nowrap;transform-origin:0 0;transform:scaleX(0.936);-webkit-text-stroke:0.2px #111;">-120</span><span style="position:absolute;left:190.2px;top:138.2px;font-size:9.5px;line-height:11px;color:#111;white-space:nowrap;transform-origin:0 0;transform:scaleX(0.972);-webkit-text-stroke:0.2px #111;">-110</span><span style="position:absolute;left:236.2px;top:138.2px;font-size:9.5px;line-height:11px;color:#111;white-space:nowrap;transform-origin:0 0;transform:scaleX(0.936);-webkit-text-stroke:0.2px #111;">-100</span><span style="position:absolute;left:284.9px;top:138.2px;font-size:9.5px;line-height:11px;color:#111;white-space:nowrap;transform-origin:0 0;transform:scaleX(0.903);-webkit-text-stroke:0.2px #111;">-90</span><span style="position:absolute;left:330.9px;top:138.2px;font-size:9.5px;line-height:11px;color:#111;white-space:nowrap;transform-origin:0 0;transform:scaleX(0.903);-webkit-text-stroke:0.2px #111;">-80</span><span style="position:absolute;left:376.9px;top:138.2px;font-size:9.5px;line-height:11px;color:#111;white-space:nowrap;transform-origin:0 0;transform:scaleX(0.903);-webkit-text-stroke:0.2px #111;">-70</span><span style="position:absolute;left:422.9px;top:138.2px;font-size:9.5px;line-height:11px;color:#111;white-space:nowrap;transform-origin:0 0;transform:scaleX(0.903);-webkit-text-stroke:0.2px #111;">-60</span><span style="position:absolute;left:468.9px;top:138.2px;font-size:9.5px;line-height:11px;color:#111;white-space:nowrap;transform-origin:0 0;transform:scaleX(0.903);-webkit-text-stroke:0.2px #111;">-50</span><span style="position:absolute;left:514.9px;top:138.2px;font-size:9.5px;line-height:11px;color:#111;white-space:nowrap;transform-origin:0 0;transform:scaleX(0.903);-webkit-text-stroke:0.2px #111;">-40</span><span style="position:absolute;left:560.9px;top:138.2px;font-size:9.5px;line-height:11px;color:#111;white-space:nowrap;transform-origin:0 0;transform:scaleX(0.903);-webkit-text-stroke:0.2px #111;">-30</span><span style="position:absolute;left:606.9px;top:138.2px;font-size:9.5px;line-height:11px;color:#111;white-space:nowrap;transform-origin:0 0;transform:scaleX(0.903);-webkit-text-stroke:0.2px #111;">-20</span><span style="position:absolute;left:652.9px;top:138.2px;font-size:9.5px;line-height:11px;color:#111;white-space:nowrap;transform-origin:0 0;transform:scaleX(0.903);-webkit-text-stroke:0.2px #111;">-10</span><span style="position:absolute;left:703.4px;top:138.2px;font-size:9.5px;line-height:11px;color:#111;white-space:nowrap;transform-origin:0 0;transform:scaleX(0.946);-webkit-text-stroke:0.2px #111;">0</span><span style="position:absolute;left:747.0px;top:138.2px;font-size:9.5px;line-height:11px;color:#111;white-space:nowrap;transform-origin:0 0;transform:scaleX(0.928);-webkit-text-stroke:0.2px #111;">10</span><span style="position:absolute;left:793.0px;top:138.2px;font-size:9.5px;line-height:11px;color:#111;white-space:nowrap;transform-origin:0 0;transform:scaleX(0.928);-webkit-text-stroke:0.2px #111;">20</span><span style="position:absolute;left:839.0px;top:138.2px;font-size:9.5px;line-height:11px;color:#111;white-space:nowrap;transform-origin:0 0;transform:scaleX(0.928);-webkit-text-stroke:0.2px #111;">30</span><span style="position:absolute;left:885.0px;top:138.2px;font-size:9.5px;line-height:11px;color:#111;white-space:nowrap;transform-origin:0 0;transform:scaleX(0.928);-webkit-text-stroke:0.2px #111;">40</span><span style="position:absolute;left:931.0px;top:138.2px;font-size:9.5px;line-height:11px;color:#111;white-space:nowrap;transform-origin:0 0;transform:scaleX(0.928);-webkit-text-stroke:0.2px #111;">50</span><span style="position:absolute;left:977.0px;top:138.2px;font-size:9.5px;line-height:11px;color:#111;white-space:nowrap;transform-origin:0 0;transform:scaleX(0.928);-webkit-text-stroke:0.2px #111;">60</span><div class="abs" style="left:20.6px;top:258.9px;width:12px;height:18px"><span style="position:absolute;left:0;top:18px;font-size:10px;line-height:12px;color:#0a0a14;transform-origin:0 0;transform:rotate(-90deg) scaleX(.88);white-space:nowrap;width:18px;text-align:center">375</span></div><div class="abs" style="left:20.6px;top:373.9px;width:12px;height:18px"><span style="position:absolute;left:0;top:18px;font-size:10px;line-height:12px;color:#0a0a14;transform-origin:0 0;transform:rotate(-90deg) scaleX(.88);white-space:nowrap;width:18px;text-align:center">350</span></div><div class="abs" style="left:20.6px;top:488.9px;width:12px;height:18px"><span style="position:absolute;left:0;top:18px;font-size:10px;line-height:12px;color:#0a0a14;transform-origin:0 0;transform:rotate(-90deg) scaleX(.88);white-space:nowrap;width:18px;text-align:center">325</span></div><div class="abs" style="left:20.6px;top:603.9px;width:12px;height:18px"><span style="position:absolute;left:0;top:18px;font-size:10px;line-height:12px;color:#0a0a14;transform-origin:0 0;transform:rotate(-90deg) scaleX(.88);white-space:nowrap;width:18px;text-align:center">300</span></div><div class="abs" style="left:20.6px;top:718.9px;width:12px;height:18px"><span style="position:absolute;left:0;top:18px;font-size:10px;line-height:12px;color:#0a0a14;transform-origin:0 0;transform:rotate(-90deg) scaleX(.88);white-space:nowrap;width:18px;text-align:center">275</span></div><div class="abs" style="left:20.6px;top:833.9px;width:12px;height:18px"><span style="position:absolute;left:0;top:18px;font-size:10px;line-height:12px;color:#0a0a14;transform-origin:0 0;transform:rotate(-90deg) scaleX(.88);white-space:nowrap;width:18px;text-align:center">250</span></div>
<svg class="ic" style="left:45px;top:162px" width="935" height="792" viewBox="45 162 935 792"><rect x="45" y="162" width="935" height="792" fill="#1a1a1a"/><path d="M60.5,200.4h3l-1.5,2.1zM60.5,246.4h3l-1.5,2.1zM60.5,292.4h3l-1.5,2.1zM60.5,338.4h3l-1.5,2.1zM60.5,384.4h3l-1.5,2.1zM60.5,430.4h3l-1.5,2.1zM60.5,476.4h3l-1.5,2.1zM60.5,522.4h3l-1.5,2.1zM60.5,568.4h3l-1.5,2.1zM60.5,614.4h3l-1.5,2.1zM60.5,660.4h3l-1.5,2.1zM60.5,706.4h3l-1.5,2.1zM60.5,752.4h3l-1.5,2.1zM60.5,798.4h3l-1.5,2.1zM60.5,844.4h3l-1.5,2.1zM60.5,890.4h3l-1.5,2.1zM60.5,936.4h3l-1.5,2.1zM106.5,200.4h3l-1.5,2.1zM106.5,246.4h3l-1.5,2.1zM106.5,292.4h3l-1.5,2.1zM106.5,338.4h3l-1.5,2.1zM106.5,384.4h3l-1.5,2.1zM106.5,430.4h3l-1.5,2.1zM106.5,476.4h3l-1.5,2.1zM106.5,522.4h3l-1.5,2.1zM106.5,568.4h3l-1.5,2.1zM106.5,614.4h3l-1.5,2.1zM106.5,660.4h3l-1.5,2.1zM106.5,706.4h3l-1.5,2.1zM106.5,752.4h3l-1.5,2.1zM106.5,798.4h3l-1.5,2.1zM106.5,844.4h3l-1.5,2.1zM106.5,890.4h3l-1.5,2.1zM106.5,936.4h3l-1.5,2.1zM152.5,200.4h3l-1.5,2.1zM152.5,246.4h3l-1.5,2.1zM152.5,292.4h3l-1.5,2.1zM152.5,338.4h3l-1.5,2.1zM152.5,384.4h3l-1.5,2.1zM152.5,430.4h3l-1.5,2.1zM152.5,476.4h3l-1.5,2.1zM152.5,522.4h3l-1.5,2.1zM152.5,568.4h3l-1.5,2.1zM152.5,614.4h3l-1.5,2.1zM152.5,660.4h3l-1.5,2.1zM152.5,706.4h3l-1.5,2.1zM152.5,752.4h3l-1.5,2.1zM152.5,798.4h3l-1.5,2.1zM152.5,844.4h3l-1.5,2.1zM152.5,890.4h3l-1.5,2.1zM152.5,936.4h3l-1.5,2.1zM198.5,200.4h3l-1.5,2.1zM198.5,246.4h3l-1.5,2.1zM198.5,292.4h3l-1.5,2.1zM198.5,338.4h3l-1.5,2.1zM198.5,384.4h3l-1.5,2.1zM198.5,430.4h3l-1.5,2.1zM198.5,476.4h3l-1.5,2.1zM198.5,522.4h3l-1.5,2.1zM198.5,568.4h3l-1.5,2.1zM198.5,614.4h3l-1.5,2.1zM198.5,660.4h3l-1.5,2.1zM198.5,706.4h3l-1.5,2.1zM198.5,752.4h3l-1.5,2.1zM198.5,798.4h3l-1.5,2.1zM198.5,844.4h3l-1.5,2.1zM198.5,890.4h3l-1.5,2.1zM198.5,936.4h3l-1.5,2.1zM244.5,200.4h3l-1.5,2.1zM244.5,246.4h3l-1.5,2.1zM244.5,292.4h3l-1.5,2.1zM244.5,338.4h3l-1.5,2.1zM244.5,384.4h3l-1.5,2.1zM244.5,430.4h3l-1.5,2.1zM244.5,476.4h3l-1.5,2.1zM244.5,522.4h3l-1.5,2.1zM244.5,568.4h3l-1.5,2.1zM244.5,614.4h3l-1.5,2.1zM244.5,660.4h3l-1.5,2.1zM244.5,706.4h3l-1.5,2.1zM244.5,752.4h3l-1.5,2.1zM244.5,798.4h3l-1.5,2.1zM244.5,844.4h3l-1.5,2.1zM244.5,890.4h3l-1.5,2.1zM244.5,936.4h3l-1.5,2.1zM290.5,200.4h3l-1.5,2.1zM290.5,246.4h3l-1.5,2.1zM290.5,292.4h3l-1.5,2.1zM290.5,338.4h3l-1.5,2.1zM290.5,384.4h3l-1.5,2.1zM290.5,430.4h3l-1.5,2.1zM290.5,476.4h3l-1.5,2.1zM290.5,522.4h3l-1.5,2.1zM290.5,568.4h3l-1.5,2.1zM290.5,614.4h3l-1.5,2.1zM290.5,660.4h3l-1.5,2.1zM290.5,706.4h3l-1.5,2.1zM290.5,752.4h3l-1.5,2.1zM290.5,798.4h3l-1.5,2.1zM290.5,844.4h3l-1.5,2.1zM290.5,890.4h3l-1.5,2.1zM290.5,936.4h3l-1.5,2.1zM336.5,200.4h3l-1.5,2.1zM336.5,246.4h3l-1.5,2.1zM336.5,292.4h3l-1.5,2.1zM336.5,338.4h3l-1.5,2.1zM336.5,384.4h3l-1.5,2.1zM336.5,430.4h3l-1.5,2.1zM336.5,476.4h3l-1.5,2.1zM336.5,522.4h3l-1.5,2.1zM336.5,568.4h3l-1.5,2.1zM336.5,614.4h3l-1.5,2.1zM336.5,660.4h3l-1.5,2.1zM336.5,706.4h3l-1.5,2.1zM336.5,752.4h3l-1.5,2.1zM336.5,798.4h3l-1.5,2.1zM336.5,844.4h3l-1.5,2.1zM336.5,890.4h3l-1.5,2.1zM336.5,936.4h3l-1.5,2.1zM382.5,200.4h3l-1.5,2.1zM382.5,246.4h3l-1.5,2.1zM382.5,292.4h3l-1.5,2.1zM382.5,338.4h3l-1.5,2.1zM382.5,384.4h3l-1.5,2.1zM382.5,430.4h3l-1.5,2.1zM382.5,476.4h3l-1.5,2.1zM382.5,522.4h3l-1.5,2.1zM382.5,568.4h3l-1.5,2.1zM382.5,614.4h3l-1.5,2.1zM382.5,660.4h3l-1.5,2.1zM382.5,706.4h3l-1.5,2.1zM382.5,752.4h3l-1.5,2.1zM382.5,798.4h3l-1.5,2.1zM382.5,844.4h3l-1.5,2.1zM382.5,890.4h3l-1.5,2.1zM382.5,936.4h3l-1.5,2.1zM428.5,200.4h3l-1.5,2.1zM428.5,246.4h3l-1.5,2.1zM428.5,292.4h3l-1.5,2.1zM428.5,338.4h3l-1.5,2.1zM428.5,384.4h3l-1.5,2.1zM428.5,430.4h3l-1.5,2.1zM428.5,476.4h3l-1.5,2.1zM428.5,522.4h3l-1.5,2.1zM428.5,568.4h3l-1.5,2.1zM428.5,614.4h3l-1.5,2.1zM428.5,660.4h3l-1.5,2.1zM428.5,706.4h3l-1.5,2.1zM428.5,752.4h3l-1.5,2.1zM428.5,798.4h3l-1.5,2.1zM428.5,844.4h3l-1.5,2.1zM428.5,890.4h3l-1.5,2.1zM428.5,936.4h3l-1.5,2.1zM474.5,200.4h3l-1.5,2.1zM474.5,246.4h3l-1.5,2.1zM474.5,292.4h3l-1.5,2.1zM474.5,338.4h3l-1.5,2.1zM474.5,384.4h3l-1.5,2.1zM474.5,430.4h3l-1.5,2.1zM474.5,476.4h3l-1.5,2.1zM474.5,522.4h3l-1.5,2.1zM474.5,568.4h3l-1.5,2.1zM474.5,614.4h3l-1.5,2.1zM474.5,660.4h3l-1.5,2.1zM474.5,706.4h3l-1.5,2.1zM474.5,752.4h3l-1.5,2.1zM474.5,798.4h3l-1.5,2.1zM474.5,844.4h3l-1.5,2.1zM474.5,890.4h3l-1.5,2.1zM474.5,936.4h3l-1.5,2.1zM520.5,200.4h3l-1.5,2.1zM520.5,246.4h3l-1.5,2.1zM520.5,292.4h3l-1.5,2.1zM520.5,338.4h3l-1.5,2.1zM520.5,384.4h3l-1.5,2.1zM520.5,430.4h3l-1.5,2.1zM520.5,476.4h3l-1.5,2.1zM520.5,522.4h3l-1.5,2.1zM520.5,568.4h3l-1.5,2.1zM520.5,614.4h3l-1.5,2.1zM520.5,660.4h3l-1.5,2.1zM520.5,706.4h3l-1.5,2.1zM520.5,752.4h3l-1.5,2.1zM520.5,798.4h3l-1.5,2.1zM520.5,844.4h3l-1.5,2.1zM520.5,890.4h3l-1.5,2.1zM520.5,936.4h3l-1.5,2.1zM566.5,200.4h3l-1.5,2.1zM566.5,246.4h3l-1.5,2.1zM566.5,292.4h3l-1.5,2.1zM566.5,338.4h3l-1.5,2.1zM566.5,384.4h3l-1.5,2.1zM566.5,430.4h3l-1.5,2.1zM566.5,476.4h3l-1.5,2.1zM566.5,522.4h3l-1.5,2.1zM566.5,568.4h3l-1.5,2.1zM566.5,614.4h3l-1.5,2.1zM566.5,660.4h3l-1.5,2.1zM566.5,706.4h3l-1.5,2.1zM566.5,752.4h3l-1.5,2.1zM566.5,798.4h3l-1.5,2.1zM566.5,844.4h3l-1.5,2.1zM566.5,890.4h3l-1.5,2.1zM566.5,936.4h3l-1.5,2.1zM612.5,200.4h3l-1.5,2.1zM612.5,246.4h3l-1.5,2.1zM612.5,292.4h3l-1.5,2.1zM612.5,338.4h3l-1.5,2.1zM612.5,384.4h3l-1.5,2.1zM612.5,430.4h3l-1.5,2.1zM612.5,476.4h3l-1.5,2.1zM612.5,522.4h3l-1.5,2.1zM612.5,568.4h3l-1.5,2.1zM612.5,614.4h3l-1.5,2.1zM612.5,660.4h3l-1.5,2.1zM612.5,706.4h3l-1.5,2.1zM612.5,752.4h3l-1.5,2.1zM612.5,798.4h3l-1.5,2.1zM612.5,844.4h3l-1.5,2.1zM612.5,890.4h3l-1.5,2.1zM612.5,936.4h3l-1.5,2.1zM658.5,200.4h3l-1.5,2.1zM658.5,246.4h3l-1.5,2.1zM658.5,292.4h3l-1.5,2.1zM658.5,338.4h3l-1.5,2.1zM658.5,384.4h3l-1.5,2.1zM658.5,430.4h3l-1.5,2.1zM658.5,476.4h3l-1.5,2.1zM658.5,522.4h3l-1.5,2.1zM658.5,568.4h3l-1.5,2.1zM658.5,614.4h3l-1.5,2.1zM658.5,660.4h3l-1.5,2.1zM658.5,706.4h3l-1.5,2.1zM658.5,752.4h3l-1.5,2.1zM658.5,798.4h3l-1.5,2.1zM658.5,844.4h3l-1.5,2.1zM658.5,890.4h3l-1.5,2.1zM658.5,936.4h3l-1.5,2.1zM704.5,200.4h3l-1.5,2.1zM704.5,246.4h3l-1.5,2.1zM704.5,292.4h3l-1.5,2.1zM704.5,338.4h3l-1.5,2.1zM704.5,384.4h3l-1.5,2.1zM704.5,430.4h3l-1.5,2.1zM704.5,476.4h3l-1.5,2.1zM704.5,522.4h3l-1.5,2.1zM704.5,568.4h3l-1.5,2.1zM704.5,614.4h3l-1.5,2.1zM704.5,660.4h3l-1.5,2.1zM704.5,706.4h3l-1.5,2.1zM704.5,752.4h3l-1.5,2.1zM704.5,798.4h3l-1.5,2.1zM704.5,844.4h3l-1.5,2.1zM704.5,890.4h3l-1.5,2.1zM704.5,936.4h3l-1.5,2.1zM750.5,200.4h3l-1.5,2.1zM750.5,246.4h3l-1.5,2.1zM750.5,292.4h3l-1.5,2.1zM750.5,338.4h3l-1.5,2.1zM750.5,384.4h3l-1.5,2.1zM750.5,430.4h3l-1.5,2.1zM750.5,476.4h3l-1.5,2.1zM750.5,522.4h3l-1.5,2.1zM750.5,568.4h3l-1.5,2.1zM750.5,614.4h3l-1.5,2.1zM750.5,660.4h3l-1.5,2.1zM750.5,706.4h3l-1.5,2.1zM750.5,752.4h3l-1.5,2.1zM750.5,798.4h3l-1.5,2.1zM750.5,844.4h3l-1.5,2.1zM750.5,890.4h3l-1.5,2.1zM750.5,936.4h3l-1.5,2.1zM796.5,200.4h3l-1.5,2.1zM796.5,246.4h3l-1.5,2.1zM796.5,292.4h3l-1.5,2.1zM796.5,338.4h3l-1.5,2.1zM796.5,384.4h3l-1.5,2.1zM796.5,430.4h3l-1.5,2.1zM796.5,476.4h3l-1.5,2.1zM796.5,522.4h3l-1.5,2.1zM796.5,568.4h3l-1.5,2.1zM796.5,614.4h3l-1.5,2.1zM796.5,660.4h3l-1.5,2.1zM796.5,706.4h3l-1.5,2.1zM796.5,752.4h3l-1.5,2.1zM796.5,798.4h3l-1.5,2.1zM796.5,844.4h3l-1.5,2.1zM796.5,890.4h3l-1.5,2.1zM796.5,936.4h3l-1.5,2.1zM842.5,200.4h3l-1.5,2.1zM842.5,246.4h3l-1.5,2.1zM842.5,292.4h3l-1.5,2.1zM842.5,338.4h3l-1.5,2.1zM842.5,384.4h3l-1.5,2.1zM842.5,430.4h3l-1.5,2.1zM842.5,476.4h3l-1.5,2.1zM842.5,522.4h3l-1.5,2.1zM842.5,568.4h3l-1.5,2.1zM842.5,614.4h3l-1.5,2.1zM842.5,660.4h3l-1.5,2.1zM842.5,706.4h3l-1.5,2.1zM842.5,752.4h3l-1.5,2.1zM842.5,798.4h3l-1.5,2.1zM842.5,844.4h3l-1.5,2.1zM842.5,890.4h3l-1.5,2.1zM842.5,936.4h3l-1.5,2.1zM888.5,200.4h3l-1.5,2.1zM888.5,246.4h3l-1.5,2.1zM888.5,292.4h3l-1.5,2.1zM888.5,338.4h3l-1.5,2.1zM888.5,384.4h3l-1.5,2.1zM888.5,430.4h3l-1.5,2.1zM888.5,476.4h3l-1.5,2.1zM888.5,522.4h3l-1.5,2.1zM888.5,568.4h3l-1.5,2.1zM888.5,614.4h3l-1.5,2.1zM888.5,660.4h3l-1.5,2.1zM888.5,706.4h3l-1.5,2.1zM888.5,752.4h3l-1.5,2.1zM888.5,798.4h3l-1.5,2.1zM888.5,844.4h3l-1.5,2.1zM888.5,890.4h3l-1.5,2.1zM888.5,936.4h3l-1.5,2.1zM934.5,200.4h3l-1.5,2.1zM934.5,246.4h3l-1.5,2.1zM934.5,292.4h3l-1.5,2.1zM934.5,338.4h3l-1.5,2.1zM934.5,384.4h3l-1.5,2.1zM934.5,430.4h3l-1.5,2.1zM934.5,476.4h3l-1.5,2.1zM934.5,522.4h3l-1.5,2.1zM934.5,568.4h3l-1.5,2.1zM934.5,614.4h3l-1.5,2.1zM934.5,660.4h3l-1.5,2.1zM934.5,706.4h3l-1.5,2.1zM934.5,752.4h3l-1.5,2.1zM934.5,798.4h3l-1.5,2.1zM934.5,844.4h3l-1.5,2.1zM934.5,890.4h3l-1.5,2.1zM934.5,936.4h3l-1.5,2.1z" fill="#a2a2a2"/><rect x="171.7" y="297.6" width="27.8" height="567.3" fill="none" stroke="#2f92ec" stroke-width="1.3" stroke-dasharray="4.4 2 1 1.8 1 1.8"/><path d="M176.7,321V856 M194.6,321V856 M180,321.5H191 M181.4,860H189.6" fill="none" stroke="#a3e6da" stroke-width="1.3" /><path d="M176.7,318V303H194.6V318" fill="none" stroke="#e832d0" stroke-width="1.6" /><circle cx="176.3" cy="321.5" r="4" fill="#a6f0e2"/><circle cx="194.3" cy="321.5" r="4" fill="#a6f0e2"/><path d="M171.7,860L176.6,855.1L181.5,860L176.6,864.9Z" fill="#1a1a1a" stroke="#a3e6da" stroke-width="1.1"/><rect x="176.0" y="859.4" width="1.2" height="1.2" fill="#a3e6da"/><path d="M189.5,860L194.4,855.1L199.3,860L194.4,864.9Z" fill="#1a1a1a" stroke="#a3e6da" stroke-width="1.1"/><rect x="193.8" y="859.4" width="1.2" height="1.2" fill="#a3e6da"/><path d="M188,581V616" fill="none" stroke="#a3e6da" stroke-width="1.2" /><path d="M188,580l-2.6,6.4h5.2z M188,617l-2.6,-6.4h5.2z" fill="#1a1a1a" stroke="#a3e6da" stroke-width="1"/><text x="185.6" y="591.6" font-family="Liberation Sans, sans-serif" font-size="5.4" font-weight="bold" fill="#a6f0e2" text-anchor="middle" transform="rotate(-90 185.6 591.6)">1XM·T0</text><text x="181.4" y="590" font-family="Liberation Sans, sans-serif" font-size="5" font-weight="bold" fill="#a6f0e2" text-anchor="middle" transform="rotate(-90 181.4 590)">CINT</text><text x="192.4" y="589.6" font-family="Liberation Sans, sans-serif" font-size="4.4" font-weight="bold" fill="#a6f0e2" text-anchor="middle" transform="rotate(90 192.4 589.6)">T01</text><rect x="259" y="334.6" width="51.6" height="129.0" fill="none" stroke="#2f92ec" stroke-width="1.3" stroke-dasharray="4.4 2 1 1.8 1 1.8"/><path d="M268,344V455 M301,344V455 M284.3,344V420 M272,455H297" fill="none" stroke="#a3e6da" stroke-width="1.3" /><path d="M271,343.6H281 M288,343.6H297.5" fill="none" stroke="#a3e6da" stroke-width="1.3" /><path d="M271.6,342.6H280.6 M287.6,342.6H297.4" fill="none" stroke="#e832d0" stroke-width="1.3" /><circle cx="268" cy="344" r="4" fill="#a6f0e2"/><rect x="280.4" y="340.4" width="7.2" height="7.2" fill="#a6f0e2"/><circle cx="301" cy="344" r="4" fill="#a6f0e2"/><path d="M263.40000000000003,454.8L268.3,449.90000000000003L273.2,454.8L268.3,459.7Z" fill="#1a1a1a" stroke="#a3e6da" stroke-width="1.1"/><rect x="267.7" y="454.2" width="1.2" height="1.2" fill="#a3e6da"/><path d="M296.1,454.8L301,449.90000000000003L305.9,454.8L301,459.7Z" fill="#1a1a1a" stroke="#a3e6da" stroke-width="1.1"/><rect x="300.4" y="454.2" width="1.2" height="1.2" fill="#a3e6da"/><path d="M291,363V443" fill="none" stroke="#a3e6da" stroke-width="1.2" /><path d="M291,362l-2.6,6.4h5.2z M291,444l-2.6,-6.4h5.2z" fill="#1a1a1a" stroke="#a3e6da" stroke-width="1"/><text x="281.4" y="403" font-family="Liberation Sans, sans-serif" font-size="4.8" font-weight="bold" fill="#a6f0e2" text-anchor="middle" transform="rotate(-90 281.4 403)">PATTERN</text><text x="277" y="403" font-family="Liberation Sans, sans-serif" font-size="4.8" font-weight="bold" fill="#a6f0e2" text-anchor="middle" transform="rotate(-90 277 403)">X2M·T01</text><text x="296.6" y="405" font-family="Liberation Sans, sans-serif" font-size="4.2" font-weight="bold" fill="#a6f0e2" text-anchor="middle" transform="rotate(90 296.6 405)">TRIM 1/8M</text><rect x="403.4" y="378.3" width="288.0" height="26.9" fill="none" stroke="#2f92ec" stroke-width="1.3" stroke-dasharray="4.4 2 1 1.8 1 1.8"/><path d="M408.5,383.2H682 M408.5,400.2H682 M408.5,388V395.4 M682.3,388V395.4" fill="none" stroke="#a3e6da" stroke-width="1.3" /><path d="M686.3,385.6V396.2" fill="none" stroke="#e832d0" stroke-width="1.5" /><path d="M403.6,383.3L408.5,378.40000000000003L413.4,383.3L408.5,388.2Z" fill="#1a1a1a" stroke="#a3e6da" stroke-width="1.1"/><rect x="407.9" y="382.7" width="1.2" height="1.2" fill="#a3e6da"/><path d="M403.6,400.2L408.5,395.3L413.4,400.2L408.5,405.09999999999997Z" fill="#1a1a1a" stroke="#a3e6da" stroke-width="1.1"/><rect x="407.9" y="399.59999999999997" width="1.2" height="1.2" fill="#a3e6da"/><circle cx="681.9" cy="383" r="4.1" fill="#a6f0e2"/><circle cx="681.9" cy="400.2" r="4.1" fill="#a6f0e2"/><text x="586" y="390.2" font-family="Liberation Sans, sans-serif" font-size="4.6" font-weight="bold" fill="#a6f0e2" text-anchor="end">Mono short</text><text x="583" y="394" font-family="Liberation Sans, sans-serif" font-size="4.2" font-weight="bold" fill="#a6f0e2" text-anchor="end">1X1</text><text x="593" y="398.2" font-family="Liberation Sans, sans-serif" font-size="4.6" font-weight="bold" fill="#a6f0e2" text-anchor="end">Cantidad: 1 Par</text><path d="M586,392V397 M599.4,388.6V398.2 M602.4,388.6V398.2" fill="none" stroke="#a3e6da" stroke-width="1" /><rect x="736.9" y="289.6" width="26.2" height="166.8" fill="none" stroke="#2f92ec" stroke-width="1.3" stroke-dasharray="4.4 2 1 1.8 1 1.8"/><path d="M741.8,297V450 M757.9,297V450 M745,297.4H754 M745.6,450H753" fill="none" stroke="#a3e6da" stroke-width="1.3" /><path d="M746,294.4H753" fill="none" stroke="#e832d0" stroke-width="1.4" /><circle cx="741.6" cy="297.4" r="4" fill="#a6f0e2"/><circle cx="757.9" cy="297.4" r="4" fill="#a6f0e2"/><path d="M737.5999999999999,450.2L741.8,446.0L746.0,450.2L741.8,454.4Z" fill="#1a1a1a" stroke="#a3e6da" stroke-width="1.1"/><rect x="741.1999999999999" y="449.59999999999997" width="1.2" height="1.2" fill="#a3e6da"/><path d="M753.6999999999999,450.2L757.9,446.0L762.1,450.2L757.9,454.4Z" fill="#1a1a1a" stroke="#a3e6da" stroke-width="1.1"/><rect x="757.3" y="449.59999999999997" width="1.2" height="1.2" fill="#a3e6da"/><text x="749.4" y="407" font-family="Liberation Sans, sans-serif" font-size="6.4" font-weight="bold" fill="#a6f0e2" text-anchor="middle" transform="rotate(90 749.4 407)">1X2M·T</text><text x="754.4" y="408" font-family="Liberation Sans, sans-serif" font-size="4.6" font-weight="bold" fill="#a6f0e2" text-anchor="middle" transform="rotate(90 754.4 408)">VISTA</text><path d="M746.6,376.4l4,-3.6 M747.8,378.2l4,-3.6" fill="none" stroke="#a3e6da" stroke-width="1" /><rect x="244" y="459" width="296.0" height="217.0" fill="none" stroke="#2f92ec" stroke-width="1.3" stroke-dasharray="4.4 2 1 1.8 1 1.8"/><path d="M337,462.8 C321,484.4 300,495 282,497.6 L281,498.2 C279.6,508 278.4,518 278,527 C279,531 280,535 280.2,539 C278,580 262,622 250,660.6 C292,667 354,670.8 392,670.8 C430,670.8 492,667 534,660.6 C522,622 506,580 503.8,539 C504,535 505,531 506,527 C505.6,518 504.4,508 503,498 L501.6,497.6 C483.6,495 462.6,484.4 446.6,462.8" fill="none" stroke="#e832d0" stroke-width="1.35" /><path d="M338.4,463.4 C346,477 365,499.4 392,500.6 C419,499.4 438,477 445.2,463.4" fill="none" stroke="#e832d0" stroke-width="1.2" /><path d="M338,465 C345,478 364,500 392,502 C420,500 439,478 445.5,465 C461.5,486 483.5,497 498.6,500 C500,508 501,518 501.6,527 C500.4,531 500,535 499.6,539 C502,580 517,622 530,658 C490,664 430,668 392,668 C354,668 294,664 254,658 C267,622 282,580 284.4,539 C284,535 283,531 282,527 C282.4,518 283.6,508 285,500 C300,497 322,486 338,465Z" fill="none" stroke="#a3e6da" stroke-width="1.3" /><path d="M392,502V578.6" fill="none" stroke="#a3e6da" stroke-width="1.2" /><circle cx="338" cy="465" r="4" fill="#a6f0e2"/><circle cx="445.5" cy="465" r="4" fill="#a6f0e2"/><circle cx="285" cy="500" r="4" fill="#a6f0e2"/><circle cx="498.6" cy="500" r="4" fill="#a6f0e2"/><circle cx="254" cy="658" r="4" fill="#a6f0e2"/><circle cx="530" cy="658" r="4" fill="#a6f0e2"/><circle cx="392" cy="668" r="4" fill="#a6f0e2"/><rect x="388.4" y="498.4" width="7.2" height="7.2" fill="#a6f0e2"/><rect x="278.0" y="523.4" width="7.2" height="7.2" fill="#a6f0e2"/><rect x="280.4" y="535.4" width="7.2" height="7.2" fill="#a6f0e2"/><rect x="320.4" y="525.4" width="7.2" height="7.2" fill="#a6f0e2"/><rect x="456.4" y="525.4" width="7.2" height="7.2" fill="#a6f0e2"/><rect x="498.4" y="523.4" width="7.2" height="7.2" fill="#a6f0e2"/><rect x="496.0" y="535.4" width="7.2" height="7.2" fill="#a6f0e2"/><path d="M277.6,532.4h3v4 M506,532.4h-3v4" fill="none" stroke="#a3e6da" stroke-width="1.8" /><path d="M440,528V631" fill="none" stroke="#a3e6da" stroke-width="1.2" /><path d="M440,527l-2.6,6.4h5.2z M440,632l-2.6,-6.4h5.2z" fill="#1a1a1a" stroke="#a3e6da" stroke-width="1"/><text x="447.6" y="580" font-family="Liberation Sans, sans-serif" font-size="4.6" font-weight="bold" fill="#a6f0e2" text-anchor="middle" transform="rotate(90 447.6 580)">TP DELANT</text><text x="431" y="582" font-family="Liberation Sans, sans-serif" font-size="6.4" font-weight="bold" fill="#a6f0e2" text-anchor="middle" transform="rotate(-90 431 582)">X1·T01</text><text x="425" y="582" font-family="Liberation Sans, sans-serif" font-size="5.4" font-weight="bold" fill="#a6f0e2" text-anchor="middle" transform="rotate(-90 425 582)">1XM·T0</text><rect x="603" y="473.8" width="294.6" height="182.2" fill="none" stroke="#2f92ec" stroke-width="1.3" stroke-dasharray="4.4 2 1 1.8 1 1.8"/><path d="M639,484 C639,520 638,548 632,570 C626,592 614.6,615 607.8,636.6 C650,644 700,648.8 749.7,648.8 C800,648.8 850,644 891,636.6 C884.6,615 874,592 868,570 C862,548 860.4,520 860,484" fill="none" stroke="#e832d0" stroke-width="1.35" /><path d="M643,483.5 C680,485 715,488.4 749.7,488.7 C785,488.4 820,485 856,483.5 C857,520 858,548 864,570 C870,592 880,615 886.5,634.7 C850,641 800,646 749.7,646 C700,646 650,641 612,634.7 C619,615 630,592 636,570 C642,548 643,520 643,483.5Z" fill="none" stroke="#a3e6da" stroke-width="1.3" /><path d="M750,499V634" fill="none" stroke="#a3e6da" stroke-width="1.2" /><path d="M750,498l-2.6,6.4h5.2z M750,635l-2.6,-6.4h5.2z" fill="#1a1a1a" stroke="#a3e6da" stroke-width="1"/><circle cx="643" cy="483.5" r="4" fill="#a6f0e2"/><circle cx="856" cy="483.5" r="4" fill="#a6f0e2"/><circle cx="612" cy="634.7" r="4" fill="#a6f0e2"/><circle cx="886.5" cy="634.7" r="4" fill="#a6f0e2"/><circle cx="749.7" cy="646" r="4" fill="#a6f0e2"/><path d="M744.8000000000001,488.8L749.7,483.90000000000003L754.6,488.8L749.7,493.7Z" fill="#1a1a1a" stroke="#a3e6da" stroke-width="1.1"/><rect x="749.1" y="488.2" width="1.2" height="1.2" fill="#a3e6da"/><text x="747" y="566" font-family="Liberation Sans, sans-serif" font-size="5.6" font-weight="bold" fill="#a6f0e2" text-anchor="middle" transform="rotate(-90 747 566)">1X2M·T0</text><text x="743.6" y="566" font-family="Liberation Sans, sans-serif" font-size="4.4" font-weight="bold" fill="#a6f0e2" text-anchor="middle" transform="rotate(-90 743.6 566)">Mono</text><text x="758.6" y="566" font-family="Liberation Sans, sans-serif" font-size="4.6" font-weight="bold" fill="#a6f0e2" text-anchor="middle" transform="rotate(90 758.6 566)">ESPALDA</text><rect x="371.9" y="684.8" width="170.1" height="160.2" fill="none" stroke="#2f92ec" stroke-width="1.3" stroke-dasharray="4.4 2 1 1.8 1 1.8"/><path d="M381.8,839.4 L537,838.4 L537,689.2 L395,697.8 C394.6,715 394.4,730 394.2,745 C393.8,770 390,788 376.4,798.4 L381.4,836" fill="none" stroke="#e832d0" stroke-width="1.35" /><path d="M397.3,700 L533.5,692 L533.5,835.7 L383.5,836.7 L378.4,800 C392,790 396,770 396.4,745 C396.6,730 397,715 397.3,700Z" fill="none" stroke="#a3e6da" stroke-width="1.3" /><circle cx="397.3" cy="700" r="4" fill="#a6f0e2"/><circle cx="533.5" cy="692" r="4" fill="#a6f0e2"/><circle cx="378.4" cy="800" r="4" fill="#a6f0e2"/><circle cx="383.5" cy="836.7" r="4" fill="#a6f0e2"/><circle cx="533.5" cy="835.7" r="4" fill="#a6f0e2"/><path d="M463,736V808" fill="none" stroke="#a3e6da" stroke-width="1.2" /><path d="M463,735l-2.6,6.4h5.2z M463,809l-2.6,-6.4h5.2z" fill="#1a1a1a" stroke="#a3e6da" stroke-width="1"/><text x="458.6" y="770" font-family="Liberation Sans, sans-serif" font-size="6.6" font-weight="bold" fill="#a6f0e2" text-anchor="middle" transform="rotate(-90 458.6 770)">X2·T01</text><text x="452.4" y="770" font-family="Liberation Sans, sans-serif" font-size="5.6" font-weight="bold" fill="#a6f0e2" text-anchor="middle" transform="rotate(-90 452.4 770)">1X2M·T</text><text x="466.6" y="769" font-family="Liberation Sans, sans-serif" font-size="4" font-weight="bold" fill="#a6f0e2" text-anchor="middle" transform="rotate(90 466.6 769)">SHORT DEL</text><rect x="695" y="676.8" width="194.7" height="174.3" fill="none" stroke="#2f92ec" stroke-width="1.3" stroke-dasharray="4.4 2 1 1.8 1 1.8"/><path d="M711,846.4 L884.4,838.8 L884.4,691.2 L742.2,680.8 C740.6,700 739.6,718 738,735 C734.6,764 721.6,789 700.6,804.6 L710.2,844" fill="none" stroke="#e832d0" stroke-width="1.35" /><path d="M744.5,683.4 L882,693.5 L882,836.7 L712.4,844 L703,806 C724,790 737,764 740.4,735 C742,718 743,700 744.5,683.4Z" fill="none" stroke="#a3e6da" stroke-width="1.3" /><circle cx="744.5" cy="683.4" r="4" fill="#a6f0e2"/><circle cx="882" cy="693.5" r="4" fill="#a6f0e2"/><circle cx="703" cy="806" r="4" fill="#a6f0e2"/><circle cx="712.4" cy="844" r="4" fill="#a6f0e2"/><circle cx="882" cy="836.7" r="4" fill="#a6f0e2"/><path d="M804,732V812" fill="none" stroke="#a3e6da" stroke-width="1.2" /><path d="M804,731l-2.6,6.4h5.2z M804,813l-2.6,-6.4h5.2z" fill="#1a1a1a" stroke="#a3e6da" stroke-width="1"/><text x="799.6" y="773" font-family="Liberation Sans, sans-serif" font-size="4.4" font-weight="bold" fill="#a6f0e2" text-anchor="middle" transform="rotate(-90 799.6 773)">SHORT TRAS</text><text x="812" y="772" font-family="Liberation Sans, sans-serif" font-size="3.8" font-weight="bold" fill="#a6f0e2" text-anchor="middle" transform="rotate(-90 812 772)">Mono short</text><text x="816" y="772" font-family="Liberation Sans, sans-serif" font-size="3.8" font-weight="bold" fill="#a6f0e2" text-anchor="middle" transform="rotate(-90 816 772)">1X2</text><text x="820.2" y="772" font-family="Liberation Sans, sans-serif" font-size="3.8" font-weight="bold" fill="#a6f0e2" text-anchor="middle" transform="rotate(-90 820.2 772)">Cantidad: 2 Par</text></svg>
<div class="abs" style="left:388px;top:188.6px;width:299px;height:112.4px;background:#fff;border-radius:3.5px;overflow:hidden"><div class="abs" style="left:0;top:0;width:299px;height:30px;background:linear-gradient(#e2f2f8,#eef8fb 55%,#fff)"></div></div><span style="position:absolute;left:397.4px;top:196.1px;font-size:12.5px;line-height:15px;color:#1e1e1e;white-space:nowrap;transform-origin:0 0;transform:scaleX(0.924);-webkit-text-stroke:0.2px #1e1e1e;">(cm) Coordenadas</span><div class="abs" style="left:667.3px;top:196.2px;width:18.8px;height:18.2px;background:#c9414c"></div><svg class="ic" style="left:673.6px;top:202.4px" width="6" height="6" viewBox="0 0 6 6"><path d="M0.6,0.6L5.4,5.4M5.4,0.6L0.6,5.4" stroke="#fff" stroke-width="1.5"/></svg><div class="abs" style="left:410px;top:222.8px;width:102.6px;height:19.8px;background:linear-gradient(#e9f5fa,#fff);border:1.6px solid #d9a25c;border-radius:1px"></div><div class="abs" style="left:410.4px;top:245.8px;width:102px;height:19.4px;background:#fff;border:1px solid #b9b9b9"></div><div class="abs" style="left:561.6px;top:222.8px;width:102px;height:19.4px;background:#fff;border:1px solid #b9b9b9"></div><div class="abs" style="left:561.6px;top:245.8px;width:102px;height:19.4px;background:#fff;border:1px solid #b9b9b9"></div><div class="abs" style="left:410.4px;top:277.2px;width:102px;height:19.6px;background:#eeeeee;border:1px solid #d3d3d3"></div><div class="abs" style="left:515px;top:222.8px;width:19px;height:19.4px;background:#f1f1f1;border:1px solid #dadada"></div><svg class="ic" style="left:515px;top:222.8px" width="19" height="20" viewBox="0 0 19 20"><rect x="4.6" y="8.6" width="10" height="7.8" rx="1" fill="none" stroke="#333333" stroke-width="1.35"/><path d="M6.6,8.4V6.2A3.1,3.1 0 0 1 12.6,5.4" fill="none" stroke="#333333" stroke-width="1.35" stroke-linecap="round"/><rect x="9" y="11.4" width="1.3" height="2.2" fill="#333333"/></svg><div class="abs" style="left:515px;top:245.8px;width:19px;height:19.4px;background:#f1f1f1;border:1px solid #dadada"></div><svg class="ic" style="left:515px;top:245.8px" width="19" height="20" viewBox="0 0 19 20"><rect x="4.6" y="8.6" width="10" height="7.8" rx="1" fill="none" stroke="#333333" stroke-width="1.35"/><path d="M6.6,8.4V6.2A3.1,3.1 0 0 1 12.6,5.4" fill="none" stroke="#333333" stroke-width="1.35" stroke-linecap="round"/><rect x="9" y="11.4" width="1.3" height="2.2" fill="#333333"/></svg><div class="abs" style="left:666.4px;top:222.8px;width:19px;height:19.4px;background:#f1f1f1;border:1px solid #dadada"></div><svg class="ic" style="left:666.4px;top:222.8px" width="19" height="20" viewBox="0 0 19 20"><rect x="4.6" y="8.6" width="10" height="7.8" rx="1" fill="none" stroke="#333333" stroke-width="1.35"/><path d="M6.6,8.4V6.2A3.1,3.1 0 0 1 12.6,5.4" fill="none" stroke="#333333" stroke-width="1.35" stroke-linecap="round"/><rect x="9" y="11.4" width="1.3" height="2.2" fill="#333333"/></svg><div class="abs" style="left:666.4px;top:245.8px;width:19px;height:19.4px;background:#f1f1f1;border:1px solid #dadada"></div><svg class="ic" style="left:666.4px;top:245.8px" width="19" height="20" viewBox="0 0 19 20"><rect x="4.6" y="8.6" width="10" height="7.8" rx="1" fill="none" stroke="#333333" stroke-width="1.35"/><path d="M6.6,8.4V6.2A3.1,3.1 0 0 1 12.6,5.4" fill="none" stroke="#333333" stroke-width="1.35" stroke-linecap="round"/><rect x="9" y="11.4" width="1.3" height="2.2" fill="#333333"/></svg><div class="abs" style="left:515px;top:277.2px;width:19px;height:19.4px;background:#f1f1f1;border:1px solid #dadada"></div><svg class="ic" style="left:515px;top:277.2px" width="19" height="20" viewBox="0 0 19 20"><rect x="4.6" y="8.6" width="10" height="7.8" rx="1" fill="none" stroke="#b9b9b9" stroke-width="1.35"/><path d="M6.6,8.4V6.2A3.1,3.1 0 0 1 12.6,5.4" fill="none" stroke="#b9b9b9" stroke-width="1.35" stroke-linecap="round"/><rect x="9" y="11.4" width="1.3" height="2.2" fill="#b9b9b9"/></svg><div class="abs" style="left:541.2px;top:224px;width:1.2px;height:40px;background:#c4c4c4"></div><div class="abs" style="left:391px;top:270px;width:294px;height:1.2px;background:#c4c4c4"></div><span style="position:absolute;left:390.9px;top:226.4px;font-size:12.5px;line-height:15px;color:#1c1c2c;white-space:nowrap;transform-origin:0 0;transform:scaleX(0.853);-webkit-text-stroke:0.2px #1c1c2c;">Dx:</span><span style="position:absolute;left:390.9px;top:249.2px;font-size:12.5px;line-height:15px;color:#1c1c2c;white-space:nowrap;transform-origin:0 0;transform:scaleX(0.853);-webkit-text-stroke:0.2px #1c1c2c;">Dy:</span><span style="position:absolute;left:548.2px;top:226.4px;font-size:12.5px;line-height:15px;color:#1c1c2c;white-space:nowrap;transform-origin:0 0;transform:scaleX(0.830);-webkit-text-stroke:0.2px #1c1c2c;">A:</span><span style="position:absolute;left:548.2px;top:249.2px;font-size:12.5px;line-height:15px;color:#1c1c2c;white-space:nowrap;transform-origin:0 0;transform:scaleX(0.784);-webkit-text-stroke:0.2px #1c1c2c;">D:</span><span style="position:absolute;left:391.0px;top:280.2px;font-size:12.5px;line-height:15px;color:#1c1c2c;white-space:nowrap;transform-origin:0 0;transform:scaleX(0.787);-webkit-text-stroke:0.2px #1c1c2c;">P:</span><div class="abs" style="left:486px;top:225.4px;width:25.4px;height:18px;overflow:hidden"><span style="position:absolute;left:2px;top:0;font-size:13px;line-height:16px;font-style:italic;color:#a4abb2;white-space:nowrap;text-decoration:underline;text-underline-offset:1.2px;transform-origin:0 0;transform:scaleX(.9)">6.57</span></div><div class="abs" style="left:482.5px;top:248.40000000000003px;width:28.9px;height:18px;overflow:hidden"><span style="position:absolute;left:2px;top:0;font-size:13px;line-height:16px;font-style:italic;color:#a4abb2;white-space:nowrap;text-decoration:underline;text-underline-offset:1.2px;transform-origin:0 0;transform:scaleX(.9)">-3.02</span></div><div class="abs" style="left:625.2px;top:225.4px;width:37.4px;height:18px;overflow:hidden"><span style="position:absolute;left:2px;top:0;font-size:13px;line-height:16px;font-style:italic;color:#a4abb2;white-space:nowrap;text-decoration:underline;text-underline-offset:1.2px;transform-origin:0 0;transform:scaleX(.9)">335.34</span></div><div class="abs" style="left:637.6px;top:248.40000000000003px;width:25.0px;height:18px;overflow:hidden"><span style="position:absolute;left:2px;top:0;font-size:13px;line-height:16px;font-style:italic;color:#a4abb2;white-space:nowrap;text-decoration:underline;text-underline-offset:1.2px;transform-origin:0 0;transform:scaleX(.9)">7.23</span></div><div class="abs" style="left:561.9px;top:276.4px;width:60.4px;height:21.8px;background:#f0f0f0;border:1px solid #d6d6d6"></div><div class="abs" style="left:625.6px;top:276.4px;width:59.8px;height:21.8px;background:#f0f0f0;border:1px solid #d6d6d6"></div><span style="position:absolute;left:575.0px;top:281.0px;font-size:11.5px;line-height:14px;color:#1a1a1a;white-space:nowrap;transform-origin:0 0;transform:scaleX(0.865);-webkit-text-stroke:0.2px #1a1a1a;">Limpiar</span><span style="position:absolute;left:638.6px;top:281.0px;font-size:11.5px;line-height:14px;color:#1a1a1a;white-space:nowrap;transform-origin:0 0;transform:scaleX(0.882);-webkit-text-stroke:0.2px #1a1a1a;">Aplicar</span>
<div class="abs" style="left:20px;top:954px;width:960px;height:26px;background:#fff"></div><div class="abs" style="left:23.6px;top:952.2px;width:5px;height:1.8px;border:1.2px solid #222;border-bottom:none;border-radius:3px 3px 0 0"></div><div class="abs" style="left:487px;top:954.6px;width:493px;height:18px;background:#e5e5e5"></div><div class="abs" style="left:487px;top:954.6px;width:13.6px;height:18.4px;background:#fff;border:1px solid #cfcfcf"></div><div class="abs" style="left:491px;top:959.4px;width:0;height:0;border-top:4.2px solid transparent;border-bottom:4.2px solid transparent;border-right:4.6px solid #333"></div><svg class="ic" style="left:0;top:954px" width="500" height="26" viewBox="0 954 500 26"><path d="M28.6,969.4 L26.2,967.2 Q25,966.4 25.4,967.8 L27.6,972.6 Q29,975.6 32,975.6 H35.6 Q38.6,975.6 39.4,972.4 L40.6,966.6 Q40.6,965 39.2,965.4 L38.4,968.4 M38.4,968.4 L38.2,963.4 Q37.4,962.2 36.6,963.4 L36.2,967.6 M36.2,967.6 L35.4,961.8 Q34.4,960.6 33.6,961.8 L33.8,967.4 M33.8,967.4 L32.2,962.6 Q31.2,961.6 30.6,962.8 L31.6,968.8 L28.6,969.4" fill="none" stroke="#2e2b2b" stroke-width="1.2" stroke-linejoin="round" stroke-linecap="round"/><circle cx="53.5" cy="966" r="4.6" fill="none" stroke="#2e2b2b" stroke-width="1.6"/><path d="M56.69,969.31L61.4,974.2" stroke="#2e2b2b" stroke-width="2.1" stroke-linecap="round"/><path d="M71.6,965V961.6H75 M82.4,961.6H85.8V965 M85.8,971V974.4H82.4 M75,974.4H71.6V971" fill="none" stroke="#2e2b2b" stroke-width="1.5"/><path d="M75,963.8H80L82.6,966.4V972.4H75Z M79.8,964V966.6H82.4" fill="none" stroke="#2e2b2b" stroke-width="1.2" stroke-linejoin="round"/><circle cx="99.9" cy="966.2" r="4.7" fill="none" stroke="#2e2b2b" stroke-width="1.6"/><path d="M103.16,969.59L107.6,974.2" stroke="#2e2b2b" stroke-width="2.1" stroke-linecap="round"/><path d="M97.4,966.2H102.4M99.9,963.7V968.7" stroke="#409e8b" stroke-width="1.5"/><circle cx="122.5" cy="966.2" r="4.7" fill="none" stroke="#2e2b2b" stroke-width="1.6"/><path d="M125.80,969.54L130.4,974.2" stroke="#2e2b2b" stroke-width="2.1" stroke-linecap="round"/><path d="M120,966.2H125" stroke="#409e8b" stroke-width="1.5"/><path d="M140.4,961.8H149.6V964H143V970H140.4Z" fill="#409e8b"/><circle cx="147" cy="967.2" r="2" fill="#409e8b"/><circle cx="147" cy="967.2" r="3.7" fill="none" stroke="#2e2b2b" stroke-width="1.4"/><path d="M149.46,969.96L153.6,974.6" stroke="#2e2b2b" stroke-width="1.9" stroke-linecap="round"/><circle cx="171.6" cy="967.6" r="3.9" fill="none" stroke="#2e2b2b" stroke-width="1.5"/><path d="M168.92,970.44L164.8,974.8" stroke="#2e2b2b" stroke-width="2.0" stroke-linecap="round"/><path d="M178,967.4 Q177,961.4 169.6,961.6 L169.6,960 L162.4,963 L166.4,966.8 L167,964.6 Q174.6,963.6 176,967.8Z" fill="#409e8b"/><circle cx="192.2" cy="968" r="3.7" fill="none" stroke="#9a9a9a" stroke-width="1.4"/><path d="M194.78,970.66L198.6,974.6" stroke="#9a9a9a" stroke-width="1.9" stroke-linecap="round"/><path d="M186,967.4 Q187,962.6 194,963 L194,961 L200.8,964.4 L196,967.6 L195.6,965.4 Q189.6,965 188.2,968Z" fill="#9a9a9a"/><circle cx="210.6" cy="963.2" r="1.95" fill="#2e2b2b"/><circle cx="210.6" cy="968.4" r="1.95" fill="#2e2b2b"/><circle cx="210.6" cy="973.6" r="1.95" fill="#2e2b2b"/><circle cx="216.0" cy="963.2" r="1.95" fill="#2e2b2b"/><circle cx="216.0" cy="968.4" r="1.95" fill="#2e2b2b"/><circle cx="216.0" cy="973.6" r="1.95" fill="#2e2b2b"/><circle cx="221.4" cy="963.2" r="1.95" fill="#2e2b2b"/><circle cx="221.4" cy="968.4" r="1.95" fill="#2e2b2b"/><circle cx="221.4" cy="973.6" r="1.95" fill="#2e2b2b"/><path d="M237.21,962.10 L239.11,961.40 C239.18,964.53 241.77,964.53 241.84,961.40 L243.74,962.10 C243.74,963.72 243.14,964.88 243.29,966.27 C243.44,967.20 244.20,967.20 244.20,968.36 L244.20,973.00 L236.60,973.00 L236.60,968.36 C236.60,967.20 237.36,967.20 237.51,966.27 C237.66,964.88 237.06,963.72 237.21,962.10 Z" fill="none" stroke="#409e8b" stroke-width="1.1" stroke-linejoin="round" /><path d="M239.04,961.78 L241.04,961.00 C241.12,964.51 243.84,964.51 243.92,961.00 L245.92,961.78 C245.92,963.60 245.28,964.90 245.44,966.46 C245.60,967.50 246.40,967.50 246.40,968.80 L246.40,974.00 L238.40,974.00 L238.40,968.80 C238.40,967.50 239.20,967.50 239.36,966.46 C239.52,964.90 238.88,963.60 239.04,961.78 Z" fill="#fff" stroke="#409e8b" stroke-width="1.1" stroke-linejoin="round" /><path d="M241.74,962.22 L244.04,961.40 C244.13,965.07 247.26,965.07 247.35,961.40 L249.65,962.22 C249.65,964.12 248.91,965.48 249.10,967.11 C249.28,968.20 250.20,968.20 250.20,969.56 L250.20,975.00 L241.00,975.00 L241.00,969.56 C241.00,968.20 241.92,968.20 242.10,967.11 C242.29,965.48 241.55,964.12 241.74,962.22 Z" fill="#fff" stroke="#2e2b2b" stroke-width="1.4" stroke-linejoin="round" /><path d="M252.2,966.8h4.4l-2.2,2.6z" fill="#777"/><path d="M269.05,961.62 L271.70,960.80 C271.80,964.47 275.41,964.47 275.51,960.80 L278.16,961.62 C278.16,963.52 277.32,964.88 277.53,966.51 C277.74,967.60 278.80,967.60 278.80,968.96 L278.80,974.40 L268.20,974.40 L268.20,968.96 C268.20,967.60 269.26,967.60 269.47,966.51 C269.68,964.88 268.84,963.52 269.05,961.62 Z" fill="none" stroke="#2e2b2b" stroke-width="1.3" stroke-linejoin="round" stroke-dasharray="2.4 1.4"/><circle cx="278.9" cy="972.2" r="3.6" fill="#fff" stroke="#2e2b2b" stroke-width="1.5"/><circle cx="278.9" cy="972.2" r="1.1" fill="#2e2b2b"/><path d="M284.6,966.6h4.4l-2.2,2.6z" fill="#777"/><path d="M296.8,962V968.4A5.9,5.9 0 0 0 308.6,968.4V962" fill="none" stroke="#2e2b2b" stroke-width="4.2"/><path d="M296.8,962.6V968.4A5.9,5.9 0 0 0 308.6,968.4V962.6" fill="none" stroke="#409e8b" stroke-width="1.5"/><path d="M296.8,962.6V968.4A5.9,5.9 0 0 0 308.6,968.4V962.6" fill="none" stroke="#7cc8b8" stroke-width="1" transform="translate(0,0)"/><path d="M324.43,961.18 L325.78,960.80 C325.84,962.53 327.67,962.53 327.73,960.80 L329.08,961.18 C329.08,962.08 328.64,962.72 328.75,963.49 C328.86,964.00 329.40,964.00 329.40,964.64 L329.40,967.20 L324.00,967.20 L324.00,964.64 C324.00,964.00 324.54,964.00 324.65,963.49 C324.76,962.72 324.32,962.08 324.43,961.18 Z" fill="#409e8b" stroke="#2e2b2b" stroke-width="0.9" stroke-linejoin="round" /><path d="M332.23,961.18 L333.58,960.80 C333.64,962.53 335.47,962.53 335.53,960.80 L336.88,961.18 C336.88,962.08 336.44,962.72 336.55,963.49 C336.66,964.00 337.20,964.00 337.20,964.64 L337.20,967.20 L331.80,967.20 L331.80,964.64 C331.80,964.00 332.34,964.00 332.45,963.49 C332.56,962.72 332.12,962.08 332.23,961.18 Z" fill="#fff" stroke="#2e2b2b" stroke-width="1" stroke-linejoin="round" /><path d="M324.43,968.98 L325.78,968.60 C325.84,970.33 327.67,970.33 327.73,968.60 L329.08,968.98 C329.08,969.88 328.64,970.52 328.75,971.29 C328.86,971.80 329.40,971.80 329.40,972.44 L329.40,975.00 L324.00,975.00 L324.00,972.44 C324.00,971.80 324.54,971.80 324.65,971.29 C324.76,970.52 324.32,969.88 324.43,968.98 Z" fill="#fff" stroke="#2e2b2b" stroke-width="1" stroke-linejoin="round" /><path d="M332.23,968.98 L333.58,968.60 C333.64,970.33 335.47,970.33 335.53,968.60 L336.88,968.98 C336.88,969.88 336.44,970.52 336.55,971.29 C336.66,971.80 337.20,971.80 337.20,972.44 L337.20,975.00 L331.80,975.00 L331.80,972.44 C331.80,971.80 332.34,971.80 332.45,971.29 C332.56,970.52 332.12,969.88 332.23,968.98 Z" fill="#409e8b" stroke="#2e2b2b" stroke-width="0.9" stroke-linejoin="round" /><path d="M339,966.8h4.4l-2.2,2.6z" fill="#777"/><path d="M352.73,962.19 L355.63,961.40 C355.74,964.96 359.69,964.96 359.80,961.40 L362.70,962.19 C362.70,964.04 361.78,965.36 362.01,966.94 C362.24,968.00 363.40,968.00 363.40,969.32 L363.40,974.60 L351.80,974.60 L351.80,969.32 C351.80,968.00 352.96,968.00 353.19,966.94 C353.42,965.36 352.50,964.04 352.73,962.19 Z" fill="none" stroke="#2e2b2b" stroke-width="1.4" stroke-linejoin="round" /><path d="M357.8,960V969.6" stroke="#409e8b" stroke-width="1.4"/><ellipse cx="359.8" cy="972" rx="5" ry="3.2" fill="#fff" stroke="#2e2b2b" stroke-width="1.5"/><circle cx="359.8" cy="972" r="1.3" fill="#2e2b2b"/><path d="M377.40,962.54 L379.90,961.80 C380.00,965.15 383.40,965.15 383.50,961.80 L386.00,962.54 C386.00,964.28 385.20,965.52 385.40,967.01 C385.60,968.00 386.60,968.00 386.60,969.24 L386.60,974.20 L376.60,974.20 L376.60,969.24 C376.60,968.00 377.60,968.00 377.80,967.01 C378.00,965.52 377.20,964.28 377.40,962.54 Z" fill="none" stroke="#2e2b2b" stroke-width="1.4" stroke-linejoin="round" /><path d="M373,970.6 L377.8,966.4 V969.2 H383.6 V972 H377.8 V974.8 Z" fill="#409e8b" stroke="#fff" stroke-width="0.8" paint-order="stroke"/><path d="M397.40,962.54 L399.90,961.80 C400.00,965.15 403.40,965.15 403.50,961.80 L406.00,962.54 C406.00,964.28 405.20,965.52 405.40,967.01 C405.60,968.00 406.60,968.00 406.60,969.24 L406.60,974.20 L396.60,974.20 L396.60,969.24 C396.60,968.00 397.60,968.00 397.80,967.01 C398.00,965.52 397.20,964.28 397.40,962.54 Z" fill="none" stroke="#2e2b2b" stroke-width="1.4" stroke-linejoin="round" /><path d="M410.2,970.6 L405.4,966.4 V969.2 H399.8 V972 H405.4 V974.8 Z" fill="#409e8b" stroke="#fff" stroke-width="0.8" paint-order="stroke"/><path d="M421.57,962.54 L423.97,961.80 C424.06,965.15 427.33,965.15 427.42,961.80 L429.82,962.54 C429.82,964.28 429.06,965.52 429.25,967.01 C429.44,968.00 430.40,968.00 430.40,969.24 L430.40,974.20 L420.80,974.20 L420.80,969.24 C420.80,968.00 421.76,968.00 421.95,967.01 C422.14,965.52 421.38,964.28 421.57,962.54 Z" fill="none" stroke="#2e2b2b" stroke-width="1.4" stroke-linejoin="round" /><circle cx="429.3" cy="971.2" r="3.8" fill="#fff"/><circle cx="429.3" cy="971.2" r="2.3" fill="none" stroke="#2e2b2b" stroke-width="1.6"/><circle cx="429.3" cy="971.2" r="3.5" fill="none" stroke="#2e2b2b" stroke-width="1.4" stroke-dasharray="1.4 1.35"/><path d="M443.33,961.82 L446.23,961.00 C446.34,964.67 450.29,964.67 450.40,961.00 L453.30,961.82 C453.30,963.72 452.38,965.08 452.61,966.71 C452.84,967.80 454.00,967.80 454.00,969.16 L454.00,974.60 L442.40,974.60 L442.40,969.16 C442.40,967.80 443.56,967.80 443.79,966.71 C444.02,965.08 443.10,963.72 443.33,961.82 Z" fill="none" stroke="#409e8b" stroke-width="1.1" stroke-linejoin="round" stroke-dasharray="2 1.1"/><path d="M446.65,963.76 L448.05,963.40 C448.10,965.02 450.01,965.02 450.06,963.40 L451.46,963.76 C451.46,964.60 451.02,965.20 451.13,965.92 C451.24,966.40 451.80,966.40 451.80,967.00 L451.80,969.40 L446.20,969.40 L446.20,967.00 C446.20,966.40 446.76,966.40 446.87,965.92 C446.98,965.20 446.54,964.60 446.65,963.76 Z" fill="none" stroke="#2e2b2b" stroke-width="1.1" stroke-linejoin="round" /><ellipse cx="451.9" cy="972" rx="4.8" ry="3.1" fill="#fff" stroke="#2e2b2b" stroke-width="1.5"/><circle cx="451.9" cy="972" r="1.3" fill="#2e2b2b"/><rect x="465.4" y="961.8" width="13.6" height="12.4" rx="0.8" fill="#fff" stroke="#2e2b2b" stroke-width="1.6"/><path d="M465.4,974.2V970L469.4,967.6L472,969.6L476.6,964.4L479,965.6V974.2Z" fill="#2e2b2b"/><circle cx="469.4" cy="964.8" r="1.3" fill="#2e2b2b"/></svg>
</body></html>
